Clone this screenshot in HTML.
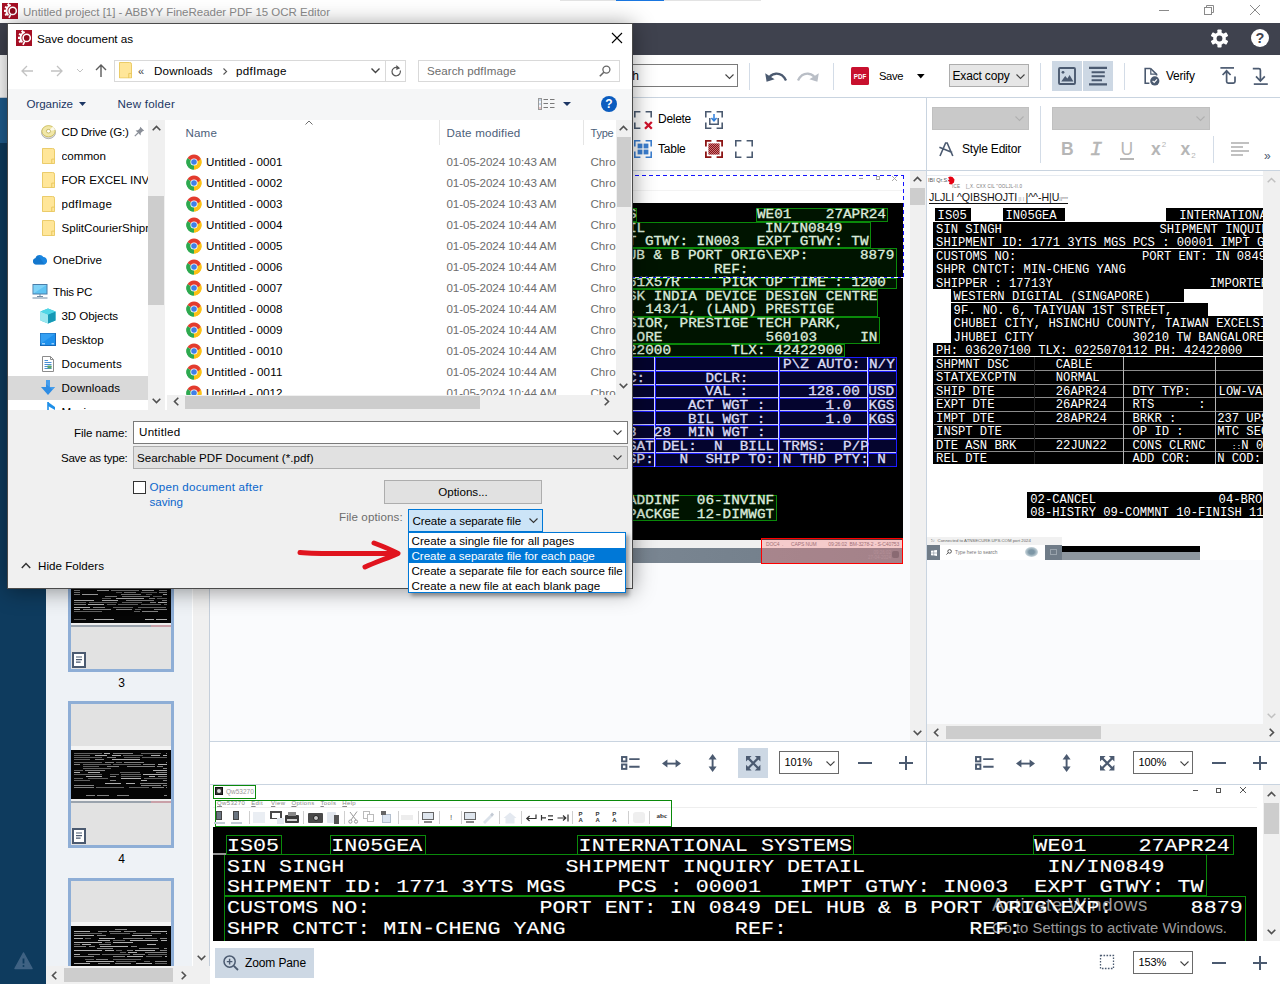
<!DOCTYPE html>
<html lang="en">
<head>
<meta charset="utf-8">
<title>Untitled project [1] - ABBYY FineReader PDF 15 OCR Editor</title>
<style>
*{box-sizing:border-box;margin:0;padding:0}
html,body{width:1280px;height:984px;overflow:hidden;background:#fff}
body{position:relative;font-family:"Liberation Sans",sans-serif;font-size:11.6px;color:#000;line-height:1}
.a{position:absolute}
.t{position:absolute;white-space:pre;line-height:14px;height:14px}
.mono{font-family:"Liberation Mono",monospace}
svg{position:absolute;overflow:visible}
/* ---------- app chrome ---------- */
#titlebar{left:0;top:0;width:1280px;height:23px;background:#fff}
#darkbar{left:0;top:23px;width:1280px;height:31.5px;background:#3f424e}
#maintb{left:0;top:54.5px;width:1280px;height:43.5px;background:#fff;border-bottom:1px solid #c9d4e0}
#sidebar{left:0;top:98px;width:46px;height:886px;background:#0e3b5e}
#pages{left:46px;top:98px;width:164px;height:886px;background:#eef2f6}
#imgpane{left:210px;top:98px;width:716px;height:686px;background:#fff}
#txtpane{left:927px;top:98px;width:353px;height:686px;background:#fff}
#zoompane{left:210px;top:785px;width:1070px;height:155px;background:#fff}
#botbar{left:210px;top:940px;width:1070px;height:44px;background:#fff}
.vsep{position:absolute;width:1px;background:#d3dce7}
.hsep{position:absolute;height:1px;background:#d3dce7}
/*IMGCSS*/.tm{position:absolute;white-space:pre;font-family:"Liberation Mono",monospace;font-size:12.3px;line-height:14px;height:14px;transform:scaleX(1.1651);transform-origin:0 0;-webkit-text-stroke:.3px currentColor}/*IMGCSS_END*/
/*TXTCSS*/.tt{position:absolute;white-space:pre;font-family:"Liberation Mono",monospace;font-size:12.2px;line-height:14px;height:14px;color:#fff;letter-spacing:-0.021px}/*TXTCSS_END*/
/*ZOOMCSS*/.tz{position:absolute;white-space:pre;font-family:"Liberation Mono",monospace;font-size:19.2px;line-height:22px;height:22px;color:#fff;transform:scaleX(1.1309);transform-origin:0 0;-webkit-text-stroke:.12px currentColor}/*ZOOMCSS_END*/
</style>
</head>
<body>
<!-- ======= application chrome ======= -->
<div id="titlebar" class="a"></div>
<div id="darkbar" class="a"></div>
<div id="maintb" class="a"></div>
<div id="sidebar" class="a"></div>
<div id="pages" class="a"></div>
<div id="imgpane" class="a"></div>
<div id="txtpane" class="a"></div>
<div id="zoompane" class="a"></div>
<div id="botbar" class="a"></div>
<!-- title bar -->
<div class="a" style="left:560px;top:0;width:201px;height:1px;background:#e3e3e3"></div>
<div class="a" style="left:616px;top:0;width:48px;height:1px;background:#1976e0"></div>
<svg style="left:2px;top:3px" width="16" height="16"><use href="#abbyy"/></svg>
<div class="t" style="left:23px;top:4.5px;color:#8c8c8c;font-size:11.5px;--w:307;letter-spacing:-0.015px">Untitled project [1] - ABBYY FineReader PDF 15 OCR Editor</div>
<svg style="left:1159px;top:10px" width="10" height="1"><rect width="10" height="1" fill="#8a8a8a"/></svg>
<svg style="left:1204px;top:5px" width="10" height="10"><path d="M2.5 2.5 V0.5 H9.5 V7.5 H7.5" stroke="#8a8a8a" fill="none"/><rect x="0.5" y="2.5" width="7" height="7" stroke="#8a8a8a" fill="#fff"/></svg>
<svg style="left:1250px;top:5px" width="10" height="10"><path d="M0 0 L10 10 M10 0 L0 10" stroke="#8a8a8a" stroke-width="1" fill="none"/></svg>
<!-- dark bar icons -->
<svg style="left:1209.5px;top:28.5px" width="19" height="19" viewBox="-9.5 -9.5 19 19"><g fill="#fff"><circle r="6.3"/><g id="gt"><rect x="-2.1" y="-9" width="4.2" height="18" rx=".8"/></g><use href="#gt" transform="rotate(60)"/><use href="#gt" transform="rotate(120)"/></g><circle r="2.9" fill="#3f424e"/></svg>
<svg style="left:1251px;top:29px" width="18" height="18"><circle cx="9" cy="9" r="9" fill="#fff"/><text x="9" y="14" text-anchor="middle" font-family="Liberation Sans,sans-serif" font-weight="700" font-size="14.5" fill="#3f424e">?</text></svg>
<!-- main toolbar -->
<div class="a" style="left:560px;top:64px;width:178px;height:23px;background:#fff;border:1px solid #7a7a7a"></div>
<div class="t" style="left:599.5px;top:69px;font-size:12px">English</div>
<svg style="left:725px;top:73.5px" width="9" height="6"><path d="M0.5 0.5 L4.5 4.5 L8.5 0.5" stroke="#444" stroke-width="1.1" fill="none"/></svg>
<div class="vsep" style="left:749px;top:63px;height:27px"></div>
<svg style="left:765px;top:69px" width="23" height="13"><path d="M3 11.5 C 5 3.5, 16 1.5, 21 11.5" stroke="#4b5a70" stroke-width="2.3" fill="none"/><path d="M0.2 4.2 L1.6 12.8 L9.6 10.2 Z" fill="#4b5a70"/></svg>
<svg style="left:796px;top:69px" width="23" height="13"><path d="M20 11.5 C 18 3.5, 7 1.5, 2 11.5" stroke="#b9bec6" stroke-width="2.3" fill="none"/><path d="M22.8 4.2 L21.4 12.8 L13.4 10.2 Z" fill="#b9bec6"/></svg>
<div class="vsep" style="left:833px;top:63px;height:27px"></div>
<svg style="left:851px;top:67px" width="18" height="18"><rect width="18" height="18" rx="1.5" fill="#c8102e"/><text x="9" y="11.8" text-anchor="middle" font-family="Liberation Sans,sans-serif" font-weight="700" font-size="7" fill="#fff" textLength="12.5" lengthAdjust="spacingAndGlyphs">PDF</text></svg>
<div class="t" style="left:879px;top:69px;font-size:11.2px;--w:24;letter-spacing:-0.375px">Save</div>
<svg style="left:916.5px;top:74px" width="8" height="5"><path d="M0 0 H7.6 L3.8 4.4 Z" fill="#000"/></svg>
<div class="a" style="left:949px;top:64px;width:80px;height:23px;background:#e6e6e6;border:1px solid #adadad"></div>
<div class="t" style="left:952.5px;top:69px;font-size:12px;--w:57;letter-spacing:-0.170px">Exact copy</div>
<svg style="left:1016px;top:73.5px" width="9" height="6"><path d="M0.5 0.5 L4.5 4.5 L8.5 0.5" stroke="#444" stroke-width="1.1" fill="none"/></svg>
<div class="vsep" style="left:1040px;top:63px;height:27px"></div>
<div class="a" style="left:1052px;top:61px;width:30px;height:30px;background:#cdd8e4"></div>
<div class="a" style="left:1083px;top:61px;width:30px;height:30px;background:#cdd8e4"></div>


<svg style="left:1040px;top:55px" width="240" height="45" viewBox="1040 55 240 45" fill="none" stroke="#4b5a70">
<rect x="1059" y="68" width="16" height="16" rx="1" stroke-width="1.9"/><circle cx="1063" cy="72.3" r="1.4" fill="#4b5a70" stroke="none"/><path d="M1061.2 81.6 L1065.2 76 L1067.4 78.6 L1069.6 75 L1073.4 81.6 Z" fill="#4b5a70" stroke="none"/>
<path d="M1089 67.9 H1107 M1089 84.3 H1107" stroke-width="2.3"/><path d="M1091.6 72.3 H1104.8 M1091.6 76.2 H1104.8 M1091.6 80.3 H1102" stroke-width="2"/>
<path d="M1150.6 68.5 H1145.2 V83.3 H1149.4 M1150.6 68.5 L1156.6 74.4 V75.4" stroke-width="1.6"/><path d="M1150.8 68.8 V74.2 H1156.4" stroke-width="1.2"/><circle cx="1154.8" cy="80.9" r="4.6" fill="#4b5a70" stroke="none"/><path d="M1152.6 80.9 L1154.2 82.5 L1157 79.4" stroke="#fff" stroke-width="1.2"/>
<path d="M1220.4 67.9 H1234" stroke-width="1.7"/><path d="M1222.6 75 L1226.6 70.8 L1230.6 75 M1226.6 71.4 V81.6 Q1226.6 83.2 1228.2 83.2 H1233.4 Q1235 83.2 1235 81.6 V76.6" stroke-width="1.7"/>
<path d="M1252.8 68.6 H1258.8 Q1260.4 68.6 1260.4 70.2 V80.4 M1256 76.4 L1260.4 81 L1264.8 76.4" stroke-width="1.7"/><path d="M1253.8 84.1 H1267.8" stroke-width="1.7"/>
</svg>
<div class="vsep" style="left:1124px;top:63px;height:27px"></div>

<div class="t" style="left:1166px;top:69px;font-size:12px;--w:28.7;letter-spacing:-0.219px">Verify</div>


<!-- pane toolbars separator lines -->
<div class="hsep" style="left:210px;top:170px;width:1070px;background:#c9d4e0"></div>
<div class="vsep" style="left:926px;top:98px;height:687px;background:#c9d4e0"></div>
<!-- image pane toolbar -->
<svg style="left:634px;top:110.5px" width="19" height="18"><path d="M0.8 6.4 V0.8 H6.4 M11.6 0.8 H17.2 V6.4 M0.8 11.6 V17.2 H6.4" stroke="#4b5a70" stroke-width="1.6" fill="none"/><path d="M11 11 L17.8 17.8 M17.8 11 L11 17.8" stroke="#d0112b" stroke-width="2.3"/></svg>
<div class="t" style="left:658px;top:112px;font-size:12px;--w:33;letter-spacing:-0.281px">Delete</div>
<svg style="left:705px;top:110.5px" width="18" height="18"><path d="M0.8 6.4 V0.8 H6.4 M11.6 0.8 H17.2 V6.4 M0.8 11.6 V17.2 H6.4 M11.6 17.2 H17.2 V11.6" stroke="#4b5a70" stroke-width="1.6" fill="none"/><path d="M4.8 7 V13.2 H13.2 V7" stroke="#4b5a70" stroke-width="1.5" fill="none"/><path d="M9 3 V9.4 M6.4 7 L9 9.8 L11.6 7" stroke="#2f7fdb" stroke-width="1.5" fill="none"/></svg>
<svg style="left:634px;top:140px" width="18" height="18"><path d="M0.8 6.4 V0.8 H6.4 M11.6 0.8 H17.2 V6.4 M0.8 11.6 V17.2 H6.4 M11.6 17.2 H17.2 V11.6" stroke="#3c7fd0" stroke-width="1.6" fill="none"/><g fill="#3c7fd0"><rect x="3.6" y="3.6" width="4.8" height="4.8"/><rect x="9.6" y="3.6" width="4.8" height="4.8"/><rect x="3.6" y="9.6" width="4.8" height="4.8"/><rect x="9.6" y="9.6" width="4.8" height="4.8"/></g></svg>
<div class="t" style="left:658px;top:142px;font-size:12px;--w:27.5;letter-spacing:-0.237px">Table</div>
<svg style="left:705px;top:140px" width="18" height="18"><path d="M0.9 6.4 V0.9 H6.4 M11.6 0.9 H17.1 V6.4 M0.9 11.6 V17.1 H6.4 M11.6 17.1 H17.1 V11.6" stroke="#8c1515" stroke-width="1.8" fill="none"/><defs><pattern id="chk" width="2" height="2" patternUnits="userSpaceOnUse"><rect width="2" height="2" fill="#c9737b"/><rect width="1" height="1" fill="#8c1515"/><rect x="1" y="1" width="1" height="1" fill="#8c1515"/></pattern></defs><rect x="3.4" y="3.4" width="11.2" height="11.2" fill="url(#chk)"/></svg>
<svg style="left:735px;top:140px" width="18" height="18"><path d="M0.8 6.4 V0.8 H6.4 M11.6 0.8 H17.2 V6.4 M0.8 11.6 V17.2 H6.4 M11.6 17.2 H17.2 V11.6" stroke="#4b5a70" stroke-width="1.6" fill="none"/></svg>
<!-- text pane toolbar -->
<div class="a" style="left:932px;top:107px;width:97px;height:23px;background:#c9c9c9;border:1px solid #c0c0c0"></div>
<svg style="left:1015px;top:116px" width="9" height="6"><path d="M0.5 0.5 L4.5 4.5 L8.5 0.5" stroke="#b0b0b0" stroke-width="1.1" fill="none"/></svg>
<div class="vsep" style="left:1040px;top:106px;height:57px"></div>
<div class="a" style="left:1052px;top:107px;width:158px;height:23px;background:#c9c9c9;border:1px solid #c0c0c0"></div>
<svg style="left:1196px;top:116px" width="9" height="6"><path d="M0.5 0.5 L4.5 4.5 L8.5 0.5" stroke="#b0b0b0" stroke-width="1.1" fill="none"/></svg>
<svg style="left:939px;top:142px" width="15" height="15"><path d="M1 14 L6.6 1 L8.2 1 L13.8 14 M0.4 5.2 L13.2 10.4" stroke="#4b5a70" stroke-width="1.6" fill="none"/></svg>
<div class="t" style="left:962px;top:142px;font-size:12px;--w:59;letter-spacing:-0.197px">Style Editor</div>
<div class="t" style="left:1061px;top:138px;height:22px;line-height:22px;font-size:17.5px;font-weight:700;color:#b6b6b6">B</div>
<div class="t" style="left:1090px;top:139px;height:22px;line-height:22px;font-size:20.5px;font-style:italic;font-weight:400;-webkit-text-stroke:.4px #b6b6b6;font-family:'Liberation Mono',monospace;color:#b6b6b6">I</div>
<div class="t" style="left:1120.5px;top:138px;height:22px;line-height:22px;font-size:17.5px;color:#b6b6b6">U</div>
<div class="a" style="left:1120px;top:157.5px;width:14px;height:2px;background:#b6b6b6"></div>
<div class="t" style="left:1151px;top:138px;height:22px;line-height:22px;font-size:17.5px;font-weight:700;color:#b6b6b6">x<span style="font-size:8px;font-weight:400;position:relative;top:-8px;left:1px">2</span></div>
<div class="t" style="left:1180.5px;top:138px;height:22px;line-height:22px;font-size:17.5px;font-weight:700;color:#b6b6b6">x<span style="font-size:8px;font-weight:400;position:relative;top:3px;left:1px">2</span></div>
<div class="vsep" style="left:1213px;top:136px;height:27px"></div>
<svg style="left:1231px;top:142px" width="18" height="14"><path d="M0 1 H18 M0 5 H12 M0 9 H18 M0 13 H12" stroke="#adadad" stroke-width="1.6"/></svg>
<div class="t" style="left:1264px;top:149px;font-size:12px;color:#4b5a70">»</div>

<!--IMGPANE_START--><!-- image pane content -->
<div class="a" style="left:210px;top:171px;width:700px;height:570px;background:#fafbfd;overflow:hidden">
<div class="a" style="left:5.0px;top:4.0px;width:688.0px;height:388.0px;background:#fff"></div>
<div class="a" style="left:5.0px;top:19.0px;width:688.0px;height:1.0px;background:#f3f3f3"></div>
<div class="a" style="left:5.0px;top:31.5px;width:688.0px;height:337.5px;background:#000"></div>
<div class="a" style="left:5.0px;top:369.0px;width:688.0px;height:8.0px;background:#f0f0f0"></div>
<div class="a" style="left:5.0px;top:377.0px;width:688.0px;height:15.0px;background:linear-gradient(90deg,#7b8793 0,#76828e 30%,#808b96 34%,#727e8a 38%,#7a8692 60%,#6f7b87 100%)"></div>
<div class="a" style="left:649px;top:7px;width:4px;height:1px;background:#aaa"></div>
<div class="a" style="left:665.5px;top:5px;width:4px;height:4px;border:1px solid #aaa"></div>
<svg style="left:682px;top:5px" width="5" height="5"><path d="M0 0 L5 5 M5 0 L0 5" stroke="#aaa" stroke-width="1"/></svg>
<div class="a" style="left:245.8px;top:37.0px;width:181.7px;height:13.5px;border:1px solid #0a8a0a;background:rgba(0,40,0,.5)"></div>
<div class="a" style="left:546.0px;top:37.0px;width:131.5px;height:13.5px;border:1px solid #0a8a0a;background:rgba(0,40,0,.5)"></div>
<div class="a" style="left:12.0px;top:50.5px;width:648.6px;height:26.0px;border:1px solid #0a8a0a;background:rgba(0,40,0,.5)"></div>
<div class="a" style="left:12.0px;top:76.5px;width:674.6px;height:30.0px;border:1px solid #0a8a0a;background:rgba(0,40,0,.5)"></div>
<div class="a" style="left:12.0px;top:106.5px;width:674.6px;height:11.5px;border:1px solid #0a8a0a;background:rgba(0,40,0,.5)"></div>
<div class="a" style="left:12.0px;top:118.0px;width:656.0px;height:28.0px;border:1px solid #0a8a0a;background:rgba(0,40,0,.5)"></div>
<div class="a" style="left:12.0px;top:146.0px;width:657.5px;height:27.0px;border:1px solid #0a8a0a;background:rgba(0,40,0,.5)"></div>
<div class="a" style="left:12.0px;top:173.0px;width:622.5px;height:13.0px;border:1px solid #0a8a0a;background:rgba(0,40,0,.5)"></div>
<div class="a" style="left:12.0px;top:323.5px;width:554.5px;height:26.0px;border:1px solid #0a8a0a;background:rgba(0,40,0,.5)"></div>
<div class="a" style="left:12.0px;top:186.0px;width:675.0px;height:109.6px;background:#04042e;border:1px solid #1c1cff"></div>
<div class="a" style="left:13.0px;top:198.6px;width:673.0px;height:1.0px;background:#c4c4f4"></div>
<div class="a" style="left:13.0px;top:199.6px;width:673.0px;height:1.0px;background:#1c1cff"></div>
<div class="a" style="left:13.0px;top:212.8px;width:673.0px;height:1.0px;background:#c4c4f4"></div>
<div class="a" style="left:13.0px;top:213.8px;width:673.0px;height:1.0px;background:#1c1cff"></div>
<div class="a" style="left:13.0px;top:225.6px;width:673.0px;height:1.0px;background:#c4c4f4"></div>
<div class="a" style="left:13.0px;top:226.6px;width:673.0px;height:1.0px;background:#1c1cff"></div>
<div class="a" style="left:13.0px;top:239.0px;width:673.0px;height:1.0px;background:#c4c4f4"></div>
<div class="a" style="left:13.0px;top:240.0px;width:673.0px;height:1.0px;background:#1c1cff"></div>
<div class="a" style="left:13.0px;top:253.0px;width:673.0px;height:1.0px;background:#c4c4f4"></div>
<div class="a" style="left:13.0px;top:254.0px;width:673.0px;height:1.0px;background:#1c1cff"></div>
<div class="a" style="left:13.0px;top:266.6px;width:673.0px;height:1.0px;background:#c4c4f4"></div>
<div class="a" style="left:13.0px;top:267.6px;width:673.0px;height:1.0px;background:#1c1cff"></div>
<div class="a" style="left:13.0px;top:281.0px;width:673.0px;height:1.0px;background:#c4c4f4"></div>
<div class="a" style="left:13.0px;top:282.0px;width:673.0px;height:1.0px;background:#1c1cff"></div>
<div class="a" style="left:444.0px;top:186.0px;width:1.0px;height:109.6px;background:#d4d4ff"></div>
<div class="a" style="left:445.0px;top:186.0px;width:1.4px;height:109.6px;background:#1c1cff"></div>
<div class="a" style="left:568.0px;top:186.0px;width:1.0px;height:109.6px;background:#d4d4ff"></div>
<div class="a" style="left:569.0px;top:186.0px;width:1.4px;height:109.6px;background:#1c1cff"></div>
<div class="a" style="left:657.0px;top:186.0px;width:1.0px;height:109.6px;background:#d4d4ff"></div>
<div class="a" style="left:658.0px;top:186.0px;width:1.4px;height:109.6px;background:#1c1cff"></div>
<div class="tm" style="left:417.8px;top:36.9px;color:#dcebdc">S</div>
<div class="tm" style="left:546.8px;top:36.9px;color:#dcebdc">WE01    27APR24</div>
<div class="tm" style="left:417.8px;top:50.5px;color:#dcebdc">IL</div>
<div class="tm" style="left:555.4px;top:50.5px;color:#dcebdc">IN/IN0849</div>
<div class="tm" style="left:392.0px;top:64.2px;color:#dcebdc">IMPT GTWY: IN003  EXPT GTWY: TW</div>
<div class="tm" style="left:220.0px;top:77.8px;color:#dcebdc">PORT ENT: IN 0849 DEL HUB &amp; B PORT ORIG\EXP:      8879</div>
<div class="tm" style="left:503.8px;top:91.5px;color:#dcebdc">REF:</div>
<div class="tm" style="left:417.8px;top:105.1px;color:#dcebdc">61X57R     PICK UP TIME : 1200</div>
<div class="tm" style="left:417.8px;top:118.7px;color:#dcebdc">SK INDIA DEVICE DESIGN CENTRE</div>
<div class="tm" style="left:417.8px;top:132.4px;color:#dcebdc">. 143/1, (LAND) PRESTIGE</div>
<div class="tm" style="left:417.8px;top:146.0px;color:#dcebdc">SIOR, PRESTIGE TECH PARK,</div>
<div class="tm" style="left:417.8px;top:159.7px;color:#dcebdc">LORE            560103     IN</div>
<div class="tm" style="left:417.8px;top:173.3px;color:#dcebdc">22000       TLX: 42422900</div>
<div class="tm" style="left:572.6px;top:186.9px;color:#dcdcf6">P\Z AUTO: N/Y</div>
<div class="tm" style="left:417.8px;top:200.6px;color:#dcdcf6">C:       DCLR:</div>
<div class="tm" style="left:495.2px;top:214.2px;color:#dcdcf6">VAL :       128.00 USD</div>
<div class="tm" style="left:478.0px;top:227.9px;color:#dcdcf6">ACT WGT :       1.0  KGS</div>
<div class="tm" style="left:478.0px;top:241.5px;color:#dcdcf6">BIL WGT :       1.0  KGS</div>
<div class="tm" style="left:417.8px;top:255.1px;color:#dcdcf6">8  28  MIN WGT :</div>
<div class="tm" style="left:417.8px;top:268.8px;color:#dcdcf6">SAT DEL:  N  BILL TRMS:  P/P</div>
<div class="tm" style="left:417.8px;top:282.4px;color:#dcdcf6">SP:   N  SHIP TO: N THD PTY: N</div>
<div class="tm" style="left:417.8px;top:323.3px;color:#dcebdc">ADDINF  06-INVINF</div>
<div class="tm" style="left:417.8px;top:337.0px;color:#dcebdc">PACKGE  12-DIMWGT</div>
<div class="a" style="left:12.0px;top:4.0px;width:681.5px;height:102.5px;background:repeating-linear-gradient(90deg,#1414ff 0 4px,transparent 4px 7px) 0 0/100% 1px no-repeat,repeating-linear-gradient(180deg,#1414ff 0 4px,transparent 4px 7px) 100% 0/1px 100% no-repeat,repeating-linear-gradient(180deg,#1414ff 0 4px,transparent 4px 7px) 0 0/1px 100% no-repeat"></div>
<div class="a" style="left:12.0px;top:106.0px;width:681.5px;height:1.0px;background:repeating-linear-gradient(90deg,#fff 0 4px,#1414ff 4px 7px)"></div>
<div class="a" style="left:551.0px;top:366.5px;width:142.0px;height:26.0px;border:1px solid #ff0000;background:rgba(255,140,140,.37)"></div>
<div class="t" style="left:556px;top:370px;font-size:5px;line-height:6px;height:6px;color:#a07078;letter-spacing:-.1px">DOC4  .      CAPS NUM         09:26:02  BM-3278-2 - S-C40753</div>
<div class="t" style="left:658px;top:379px;font-size:4.5px;line-height:5px;height:10px;color:#b59098;text-align:right">09:26:02<br>27-04-2024</div>
<div class="a" style="left:682px;top:380px;width:7px;height:7px;background:#8a6a72;border-radius:2px"></div>
</div>
<div class="a" style="left:910px;top:171px;width:16px;height:570px;background:#f0f0f0"></div>
<div class="a" style="left:910px;top:188px;width:15px;height:17px;background:#cdcdcd"></div>
<svg style="left:913px;top:176px" width="9" height="6"><path d="M0.7 5.3 L4.5 1.5 L8.3 5.3" stroke="#505050" stroke-width="1.6" fill="none"/></svg>
<svg style="left:913px;top:730px" width="9" height="6"><path d="M0.7 0.7 L4.5 4.5 L8.3 0.7" stroke="#505050" stroke-width="1.6" fill="none"/></svg><!--IMGPANE_END-->
<!--TXTPANE_START--><!-- text pane content -->
<div class="a" style="left:927px;top:171px;width:336px;height:553px;background:#fafbfd;overflow:hidden">
<div class="a" style="left:0.0px;top:5.0px;width:336.0px;height:384.0px;background:#fff"></div>
<div class="a" style="left:0.0px;top:0.0px;width:336.0px;height:5.0px;background:#fff"></div>
<div class="a" style="left:0.0px;top:4.0px;width:336.0px;height:1.0px;background:#e6ebf1"></div>
<div class="t" style="left:1px;top:5px;font-size:5.5px;line-height:8px;height:8px;color:#555">IBI Qr.S:</div>
<svg style="left:20px;top:4.5px" width="8" height="9"><path d="M1 1.5 L3 0.5 L5.5 1 L7.5 3.5 L7 6.5 L4.5 8.5 L2 8 L2.6 6 L0.8 4.6 L2.4 3.4 Z" fill="#e60012"/></svg>
<div class="t" style="left:25px;top:13px;font-size:4.5px;line-height:6px;height:6px;color:#777;letter-spacing:.2px">ICE    [_X. CXX CIL "OOLJL-II.0</div>
<div class="t" id="garble" style="left:2px;top:19.5px;font-size:10.6px;line-height:13px;height:13px;color:#111;letter-spacing:-.06px;border-bottom:1px solid #111">JLJLI ^QIBSHOJTI<span style="font-size:5px;color:#999;letter-spacing:0"> |I I </span>|^^-H|U<span style="font-size:5px;color:#777;letter-spacing:0">II***</span></div>
<div class="a" style="left:7.8px;top:37.1px;width:36.2px;height:13.4px;background:#000"></div>
<div class="a" style="left:76.0px;top:37.1px;width:62.0px;height:13.4px;background:#000"></div>
<div class="a" style="left:239.0px;top:37.1px;width:136.6px;height:13.4px;background:#000"></div>
<div class="a" style="left:6.1px;top:50.6px;width:369.5px;height:26.9px;background:#000"></div>
<div class="a" style="left:6.1px;top:77.6px;width:369.5px;height:40.4px;background:#000"></div>
<div class="a" style="left:23.7px;top:118.1px;width:233.0px;height:13.4px;background:#000"></div>
<div class="a" style="left:23.7px;top:131.6px;width:257.8px;height:13.4px;background:#000"></div>
<div class="a" style="left:23.7px;top:145.1px;width:351.9px;height:26.9px;background:#000"></div>
<div class="a" style="left:6.1px;top:172.1px;width:369.5px;height:13.4px;background:#000"></div>
<div class="a" style="left:6.1px;top:185.6px;width:369.5px;height:107.9px;background:#000"></div>
<div class="a" style="left:100.3px;top:320.6px;width:275.3px;height:26.9px;background:#000"></div>
<div class="tt" style="left:10.6px;top:38.1px;">IS05</div>
<div class="tt" style="left:78.5px;top:38.1px;">IN05GEA</div>
<div class="tt" style="left:252.2px;top:38.1px;">INTERNATIONAL SYSTEMS</div>
<div class="tt" style="left:9.1px;top:51.6px;">SIN SINGH</div>
<div class="tt" style="left:232.5px;top:51.6px;">SHIPMENT INQUIRY DETAIL</div>
<div class="tt" style="left:9.1px;top:65.1px;">SHIPMENT ID: 1771 3YTS MGS PCS : 00001 IMPT GTWY: IN003</div>
<div class="tt" style="left:9.1px;top:78.6px;">CUSTOMS NO:</div>
<div class="tt" style="left:215.0px;top:78.6px;">PORT ENT: IN 0849 DEL</div>
<div class="tt" style="left:9.1px;top:92.1px;">SHPR CNTCT: MIN-CHENG YANG</div>
<div class="tt" style="left:9.1px;top:105.6px;">SHIPPER : 17713Y</div>
<div class="tt" style="left:282.8px;top:105.6px;">IMPORTER</div>
<div class="tt" style="left:26.6px;top:119.1px;">WESTERN DIGITAL (SINGAPORE)</div>
<div class="tt" style="left:26.6px;top:132.6px;">9F. NO. 6, TAIYUAN 1ST STREET,</div>
<div class="tt" style="left:26.6px;top:146.1px;">CHUBEI CITY, HSINCHU COUNTY, TAIWAN EXCELSIOR</div>
<div class="tt" style="left:26.6px;top:159.6px;">JHUBEI CITY</div>
<div class="tt" style="left:205.5px;top:159.6px;">30210 TW BANGALORE</div>
<div class="tt" style="left:9.1px;top:173.1px;">PH: 036207100 TLX: 0225070112 PH: 42422000</div>
<div class="tt" style="left:9.1px;top:186.6px;">SHPMNT DSC</div>
<div class="tt" style="left:128.8px;top:186.6px;">CABLE</div>
<div class="tt" style="left:9.1px;top:200.1px;">STATXEXCPTN</div>
<div class="tt" style="left:128.8px;top:200.1px;">NORMAL</div>
<div class="tt" style="left:9.1px;top:213.6px;">SHIP DTE</div>
<div class="tt" style="left:128.8px;top:213.6px;">26APR24</div>
<div class="tt" style="left:205.5px;top:213.6px;">DTY TYP:</div>
<div class="tt" style="left:291.6px;top:213.6px;">LOW-VALUE</div>
<div class="tt" style="left:9.1px;top:227.1px;">EXPT DTE</div>
<div class="tt" style="left:128.8px;top:227.1px;">26APR24</div>
<div class="tt" style="left:205.5px;top:227.1px;">RTS      :</div>
<div class="tt" style="left:9.1px;top:240.6px;">IMPT DTE</div>
<div class="tt" style="left:128.8px;top:240.6px;">28APR24</div>
<div class="tt" style="left:205.5px;top:240.6px;">BRKR :</div>
<div class="tt" style="left:290.2px;top:240.6px;">237 UPS</div>
<div class="tt" style="left:9.1px;top:254.1px;">INSPT DTE</div>
<div class="tt" style="left:205.5px;top:254.1px;">OP ID :</div>
<div class="tt" style="left:290.2px;top:254.1px;">MTC SEC</div>
<div class="tt" style="left:9.1px;top:267.6px;">DTE ASN BRK</div>
<div class="tt" style="left:128.8px;top:267.6px;">22JUN22</div>
<div class="tt" style="left:205.5px;top:267.6px;">CONS CLRNC</div>
<div class="tt" style="left:304.8px;top:267.6px;"><span style="font-size:8px">::</span>N 0</div>
<div class="tt" style="left:9.1px;top:281.1px;">REL DTE</div>
<div class="tt" style="left:205.5px;top:281.1px;">ADD COR:</div>
<div class="tt" style="left:290.2px;top:281.1px;">N COD:</div>
<div class="tt" style="left:103.3px;top:321.6px;">02-CANCEL</div>
<div class="tt" style="left:291.6px;top:321.6px;">04-BROKER</div>
<div class="tt" style="left:103.3px;top:335.1px;">08-HISTRY 09-COMMNT 10-FINISH 11-</div>
<div class="a" style="left:7.0px;top:199.3px;width:330.0px;height:1.0px;background:#8c8c8c"></div>
<div class="a" style="left:7.0px;top:212.8px;width:330.0px;height:1.0px;background:#8c8c8c"></div>
<div class="a" style="left:7.0px;top:226.3px;width:330.0px;height:1.0px;background:#8c8c8c"></div>
<div class="a" style="left:7.0px;top:239.8px;width:330.0px;height:1.0px;background:#8c8c8c"></div>
<div class="a" style="left:7.0px;top:253.3px;width:330.0px;height:1.0px;background:#8c8c8c"></div>
<div class="a" style="left:7.0px;top:266.8px;width:330.0px;height:1.0px;background:#8c8c8c"></div>
<div class="a" style="left:7.0px;top:280.3px;width:330.0px;height:1.0px;background:#8c8c8c"></div>
<div class="a" style="left:196.0px;top:185.6px;width:1.0px;height:107.9px;background:#b4b4b4"></div>
<div class="a" style="left:288.0px;top:185.6px;width:1.0px;height:107.9px;background:#b4b4b4"></div>
<div class="a" style="left:107.0px;top:185.6px;width:1.0px;height:107.9px;background:#222"></div>
<div class="a" style="left:0.0px;top:366.0px;width:135.0px;height:8.0px;background:#f1f1f1"></div>
<div class="t" style="left:4px;top:367px;font-size:4.3px;line-height:6px;height:6px;color:#666">&#9099;   Connected to ATNSECURE.UPS.COM port 2024</div>
<div class="a" style="left:0.0px;top:374.0px;width:135.0px;height:15.0px;background:#fff"></div>
<div class="a" style="left:0.0px;top:374.0px;width:13.0px;height:15.0px;background:#707c88"></div>
<svg style="left:3.5px;top:378.5px" width="6" height="6"><path d="M0 0.8 L2.6 0.4 V2.8 H0Z M3.1 0.3 L6 0 V2.8 H3.1Z M0 3.3 H2.6 V5.6 L0 5.2Z M3.1 3.3 H6 V6 L3.1 5.6Z" fill="#fff"/></svg>
<svg style="left:19px;top:378px" width="6" height="6"><circle cx="3.6" cy="2.4" r="1.8" stroke="#333" stroke-width=".8" fill="none"/><path d="M2.4 3.6 L0.4 5.6" stroke="#333" stroke-width=".8"/></svg>
<div class="t" style="left:28px;top:378.5px;font-size:4.8px;line-height:6px;height:6px;color:#777">Type here to search</div>
<div class="a" style="left:98px;top:376px;width:13px;height:10px;border-radius:50%;background:radial-gradient(#7d97a6 30%,#c9d6dc 70%,#fff 100%)"></div>
<div class="a" style="left:118.0px;top:374.0px;width:17.0px;height:15.0px;background:#707c88"></div>
<div class="a" style="left:123px;top:378px;width:7px;height:6px;border:1px solid #9aa4ad"></div>
<div class="a" style="left:135.0px;top:375.0px;width:138.0px;height:5.5px;background:#000"></div>
<div class="a" style="left:135.0px;top:380.5px;width:138.0px;height:8.0px;background:#8e979f"></div>
</div>
<div class="a" style="left:1263px;top:171px;width:17px;height:553px;background:#f0f0f0"></div>
<svg style="left:1267px;top:177px" width="9" height="6"><path d="M0.7 5.3 L4.5 1.5 L8.3 5.3" stroke="#c0c0c0" stroke-width="1.5" fill="none"/></svg>
<svg style="left:1267px;top:713px" width="9" height="6"><path d="M0.7 0.7 L4.5 4.5 L8.3 0.7" stroke="#c0c0c0" stroke-width="1.5" fill="none"/></svg>
<div class="a" style="left:927px;top:724px;width:353px;height:17px;background:#f0f0f0"></div>
<div class="a" style="left:946px;top:726px;width:155px;height:13px;background:#cdcdcd"></div>
<svg style="left:933px;top:728px" width="6" height="9"><path d="M5.3 0.7 L1.5 4.5 L5.3 8.3" stroke="#505050" stroke-width="1.6" fill="none"/></svg>
<svg style="left:1269px;top:728px" width="6" height="9"><path d="M0.7 0.7 L4.5 4.5 L0.7 8.3" stroke="#505050" stroke-width="1.6" fill="none"/></svg><!--TXTPANE_END-->
<!--ZOOMPANE_START--><!-- zoom control rows -->
<div class="hsep" style="left:210px;top:741px;width:1070px;background:#c9d4e0"></div>
<div class="hsep" style="left:210px;top:784px;width:1070px;background:#c9d4e0"></div>
<div class="vsep" style="left:209px;top:98px;height:886px;background:#c5cfdb"></div>
<svg style="left:620.5px;top:756px" width="19" height="14"><rect x="1" y="1" width="4.4" height="4.4" fill="none" stroke="#4b5a70" stroke-width="1.9"/><rect x="1" y="8.5" width="4.4" height="4.4" fill="none" stroke="#4b5a70" stroke-width="1.9"/><path d="M8.2 3.1 H18.6 M8.2 10.7 H18.6" stroke="#4b5a70" stroke-width="1.9"/></svg>
<svg style="left:661.5px;top:758.5px" width="19" height="9"><path d="M3.5 4.6 H15.5" stroke="#4b5a70" stroke-width="1.9" fill="none"/><path d="M0 4.6 L5.4 0.6 V8.6 Z M19 4.6 L13.6 0.6 V8.6 Z" fill="#4b5a70"/></svg>
<svg style="left:707.5px;top:753.8px" width="9" height="18"><path d="M4.6 3.5 V14.5" stroke="#4b5a70" stroke-width="1.9" fill="none"/><path d="M4.6 0 L0.6 5.4 H8.6 Z M4.6 18 L0.6 12.6 H8.6 Z" fill="#4b5a70"/></svg>
<div class="a" style="left:738.0px;top:748px;width:30px;height:30px;background:#cdd8e4"></div>
<svg style="left:745.8px;top:755.8px" width="14.4" height="14.4"><path d="M2.4 2.4 L12 12 M12 2.4 L2.4 12" stroke="#4b5a70" stroke-width="2.2"/><path d="M0 5.6 V0 H5.6 Z M8.8 0 H14.4 V5.6 Z M0 8.8 V14.4 H5.6 Z M14.4 8.8 V14.4 H8.8 Z" fill="#4b5a70"/></svg>
<div class="a" style="left:779.0px;top:751px;width:60px;height:23px;background:#fff;border:1px solid #6a6a6a"></div>
<div class="t" style="left:784.5px;top:755px;font-size:11px;--w:27.7;letter-spacing:-0.110px">101%</div>
<svg style="left:825.5px;top:760.5px" width="9" height="6"><path d="M0.5 0.5 L4.5 4.5 L8.5 0.5" stroke="#444" stroke-width="1.1" fill="none"/></svg>
<div class="a" style="left:858.0px;top:762px;width:14px;height:1.8px;background:#4b5a70"></div>
<div class="a" style="left:899.0px;top:762px;width:14px;height:1.8px;background:#4b5a70"></div>
<div class="a" style="left:905.1px;top:755.9px;width:1.8px;height:14px;background:#4b5a70"></div>
<svg style="left:974.5px;top:756px" width="19" height="14"><rect x="1" y="1" width="4.4" height="4.4" fill="none" stroke="#4b5a70" stroke-width="1.9"/><rect x="1" y="8.5" width="4.4" height="4.4" fill="none" stroke="#4b5a70" stroke-width="1.9"/><path d="M8.2 3.1 H18.6 M8.2 10.7 H18.6" stroke="#4b5a70" stroke-width="1.9"/></svg>
<svg style="left:1015.5px;top:758.5px" width="19" height="9"><path d="M3.5 4.6 H15.5" stroke="#4b5a70" stroke-width="1.9" fill="none"/><path d="M0 4.6 L5.4 0.6 V8.6 Z M19 4.6 L13.6 0.6 V8.6 Z" fill="#4b5a70"/></svg>
<svg style="left:1061.5px;top:753.8px" width="9" height="18"><path d="M4.6 3.5 V14.5" stroke="#4b5a70" stroke-width="1.9" fill="none"/><path d="M4.6 0 L0.6 5.4 H8.6 Z M4.6 18 L0.6 12.6 H8.6 Z" fill="#4b5a70"/></svg>
<svg style="left:1099.8px;top:755.8px" width="14.4" height="14.4"><path d="M2.4 2.4 L12 12 M12 2.4 L2.4 12" stroke="#4b5a70" stroke-width="2.2"/><path d="M0 5.6 V0 H5.6 Z M8.8 0 H14.4 V5.6 Z M0 8.8 V14.4 H5.6 Z M14.4 8.8 V14.4 H8.8 Z" fill="#4b5a70"/></svg>
<div class="a" style="left:1133.0px;top:751px;width:60px;height:23px;background:#fff;border:1px solid #6a6a6a"></div>
<div class="t" style="left:1138.5px;top:755px;font-size:11px;--w:27.7;letter-spacing:-0.110px">100%</div>
<svg style="left:1179.5px;top:760.5px" width="9" height="6"><path d="M0.5 0.5 L4.5 4.5 L8.5 0.5" stroke="#444" stroke-width="1.1" fill="none"/></svg>
<div class="a" style="left:1212.0px;top:762px;width:14px;height:1.8px;background:#4b5a70"></div>
<div class="a" style="left:1253.0px;top:762px;width:14px;height:1.8px;background:#4b5a70"></div>
<div class="a" style="left:1259.1px;top:755.9px;width:1.8px;height:14px;background:#4b5a70"></div>
<!-- zoom pane content -->
<div class="a" style="left:211px;top:785px;width:1052px;height:156px;background:#fff;overflow:hidden">
<div class="a" style="left:2.0px;top:42.3px;width:1044.0px;height:114.0px;background:#000"></div>
<div class="a" style="left:2.0px;top:22.0px;width:1044.0px;height:1.0px;background:#eee"></div>
<div class="a" style="left:2.3px;top:0.0px;width:42.5px;height:13.5px;border:1px solid #0a8a0a"></div>
<div class="a" style="left:4.4px;top:15.4px;width:456.6px;height:27.0px;border:1px solid #0a8a0a"></div>
<div class="a" style="left:4px;top:2px;width:8px;height:8px;background:#333;border:1px solid #111"></div><div class="a" style="left:6px;top:4px;width:4px;height:4px;background:#ddd;border-radius:50%"></div>
<div class="t" style="left:15px;top:1.5px;font-size:6.5px;line-height:9px;height:9px;color:#999">Qw53270</div>
<div class="t" style="left:6px;top:14.299999999999955px;font-size:6px;line-height:8px;height:8px;color:#888;letter-spacing:.35px"><u>Q</u>w53270   <u>E</u>dit    <u>V</u>iew   <u>O</u>ptions   <u>T</u>ools   <u>H</u>elp</div>
<div class="a" style="left:5px;top:26px;width:6px;height:9px;background:#6a7480;border:1px solid #444"></div><div class="a" style="left:3px;top:37px;width:11px;height:2px;background:#c3ccd6"></div>
<div class="a" style="left:22px;top:26px;width:6px;height:9px;background:#6a7480;border:1px solid #444"></div><div class="a" style="left:20px;top:37px;width:11px;height:2px;background:#c3ccd6"></div>
<div class="a" style="left:42px;top:27px;width:12px;height:11px;background:#eaeef3"></div>
<div class="a" style="left:59px;top:26px;width:12px;height:8px;border:2px solid #4a4a4a;border-bottom-width:1.5px;background:#fff"></div><div class="a" style="left:66px;top:33px;width:7px;height:6px;background:#e3e8ee"></div>
<div class="a" style="left:74px;top:30px;width:14px;height:8px;background:#3a3a3a;border-radius:1px"></div><div class="a" style="left:77px;top:26.5px;width:8px;height:4px;background:#888"></div><div class="a" style="left:76px;top:34px;width:10px;height:2px;background:#d0d0d0"></div>
<div class="a" style="left:97px;top:27.5px;width:15px;height:10px;background:#4a4a4a;border-radius:1px"></div><div class="a" style="left:101.5px;top:29.5px;width:6px;height:6px;background:#c8c8c8;border-radius:50%;border:1px solid #222"></div>
<div class="a" style="left:116px;top:27px;width:9px;height:11px;background:#e2e7ee;border-radius:1px"></div><div class="a" style="left:123px;top:30px;width:5px;height:9px;background:#555"></div>
<svg style="left:136.5px;top:25.5px" width="11" height="13"><path d="M9 0.5 L3 9 M2 1 L8 9" stroke="#999" stroke-width="1"/><circle cx="2.4" cy="10.6" r="1.6" stroke="#999" fill="none"/><circle cx="8" cy="10.6" r="1.6" stroke="#999" fill="none"/></svg>
<div class="a" style="left:152px;top:26px;width:7px;height:8px;border:1px solid #bbb;background:#fff"></div><div class="a" style="left:156px;top:29px;width:7px;height:8px;border:1px solid #bbb;background:#fff"></div>
<div class="a" style="left:170.60000000000002px;top:29px;width:9px;height:9px;background:#dde6f2;border:1px solid #b3bfce"></div><div class="a" style="left:169.60000000000002px;top:26px;width:5px;height:4px;background:#666"></div>
<div class="a" style="left:189.7px;top:30px;width:12px;height:5px;background:#ededed"></div>
<div class="a" style="left:211px;top:27px;width:12px;height:8px;border:1px solid #666;background:#dfe6ee"></div><div class="a" style="left:213px;top:36px;width:8px;height:1.5px;background:#888"></div>
<div class="t" style="left:239px;top:28px;font-size:8px;line-height:9px;height:9px;color:#555">!</div>
<div class="a" style="left:253px;top:27px;width:12px;height:8px;border:1px solid #666;background:#dfe6ee"></div><div class="a" style="left:255px;top:36px;width:8px;height:1.5px;background:#888"></div>
<svg style="left:271px;top:27px" width="12" height="12"><path d="M1 10 L8 3 L10 5 L3 12Z" fill="#dbe2ea"/><path d="M8 3 L10 0.5 L12 2.5 L10 5Z" fill="#c3cad4"/></svg>
<svg style="left:292px;top:27px" width="14" height="12"><path d="M7 0.5 L13.5 6 H11.5 V11.5 H2.5 V6 H0.5Z" fill="#e4e9f0"/></svg>
<svg style="left:314px;top:29px" width="12" height="8"><path d="M11 0.5 V4.5 H2 M4.6 2 L1.8 4.5 L4.6 7" stroke="#333" stroke-width="1.2" fill="none"/></svg>
<svg style="left:330px;top:29px" width="13" height="8"><path d="M0.5 1 V6.5 M0.5 3.8 H5 M7 1.8 H12 M7 5.6 H12" stroke="#333" stroke-width="1.2" fill="none"/></svg>
<svg style="left:346px;top:29px" width="12" height="8"><path d="M0.5 4 H8.5 M6 1.5 L8.8 4 L6 6.5 M11 0.5 V7.5" stroke="#333" stroke-width="1.2" fill="none"/></svg>
<div class="t" style="left:367.5px;top:25.5px;font-size:6px;line-height:6px;height:13px;color:#333;font-weight:700">P<br>A</div>
<div class="t" style="left:384.5px;top:25.5px;font-size:6px;line-height:6px;height:13px;color:#333;font-weight:700">P<br>A</div>
<div class="t" style="left:401.29999999999995px;top:25.5px;font-size:6px;line-height:6px;height:13px;color:#333;font-weight:700">P<br>A</div>
<div class="a" style="left:422px;top:27px;width:12px;height:11px;background:#efefef;border-radius:3px"></div>
<div class="a" style="left:37.5px;top:26.0px;width:1.0px;height:13.0px;background:#cfcfcf"></div>
<div class="a" style="left:92.0px;top:26.0px;width:1.0px;height:13.0px;background:#cfcfcf"></div>
<div class="a" style="left:132.5px;top:26.0px;width:1.0px;height:13.0px;background:#cfcfcf"></div>
<div class="a" style="left:186.5px;top:26.0px;width:1.0px;height:13.0px;background:#cfcfcf"></div>
<div class="a" style="left:207.0px;top:26.0px;width:1.0px;height:13.0px;background:#cfcfcf"></div>
<div class="a" style="left:228.0px;top:26.0px;width:1.0px;height:13.0px;background:#cfcfcf"></div>
<div class="a" style="left:249.8px;top:26.0px;width:1.0px;height:13.0px;background:#cfcfcf"></div>
<div class="a" style="left:287.7px;top:26.0px;width:1.0px;height:13.0px;background:#cfcfcf"></div>
<div class="a" style="left:309.7px;top:26.0px;width:1.0px;height:13.0px;background:#cfcfcf"></div>
<div class="a" style="left:361.0px;top:26.0px;width:1.0px;height:13.0px;background:#cfcfcf"></div>
<div class="a" style="left:417.0px;top:26.0px;width:1.0px;height:13.0px;background:#cfcfcf"></div>
<div class="a" style="left:438.0px;top:26.0px;width:1.0px;height:13.0px;background:#cfcfcf"></div>
<div class="t" style="left:445.5px;top:26.5px;font-size:7px;line-height:9px;height:9px;color:#333;font-family:'Liberation Serif',serif;font-weight:700">abc</div>
<div class="a" style="left:982.0px;top:4.5px;width:5.0px;height:1.0px;background:#555"></div>
<div class="a" style="left:1004.5px;top:2.5px;width:5px;height:5px;border:1px solid #555"></div>
<svg style="left:1029px;top:2px" width="6" height="6"><path d="M0 0 L6 6 M6 0 L0 6" stroke="#555" stroke-width="1"/></svg>
<div class="a" style="left:15.0px;top:50.0px;width:55.5px;height:20.4px;border:1px solid #0a8a0a"></div>
<div class="a" style="left:119.4px;top:50.0px;width:95.3px;height:20.4px;border:1px solid #0a8a0a"></div>
<div class="a" style="left:366.0px;top:50.0px;width:277.0px;height:20.4px;border:1px solid #0a8a0a"></div>
<div class="a" style="left:822.0px;top:50.0px;width:200.7px;height:20.4px;border:1px solid #0a8a0a"></div>
<div class="a" style="left:13.3px;top:69.4px;width:983.2px;height:42.0px;border:1px solid #0a8a0a"></div>
<div class="a" style="left:13.3px;top:111.4px;width:1021.7px;height:53.6px;border:1px solid #0a8a0a"></div>
<div class="a" style="left:2.0px;top:68.0px;width:13.0px;height:2.0px;background:#959595"></div>
<div class="tz" style="left:2.5px;top:50.2px"> IS05    IN05GEA            INTERNATIONAL SYSTEMS              WE01    27APR24</div>
<div class="tz" style="left:2.5px;top:70.8px"> SIN SINGH                 SHIPMENT INQUIRY DETAIL              IN/IN0849</div>
<div class="tz" style="left:2.5px;top:91.4px"> SHIPMENT ID: 1771 3YTS MGS    PCS : 00001   IMPT GTWY: IN003  EXPT GTWY: TW</div>
<div class="tz" style="left:2.5px;top:112.1px"> CUSTOMS NO:             PORT ENT: IN 0849 DEL HUB &amp; B PORT ORIG\EXP:      8879</div>
<div class="tz" style="left:2.5px;top:132.7px"> SHPR CNTCT: MIN-CHENG YANG             REF:              REF:</div>
<div class="t" style="left:781px;top:109px;font-size:18.6px;line-height:22px;height:22px;color:rgba(255,255,255,.62);--w:156;letter-spacing:0.578px">Activate Windows</div>
<div class="t" style="left:781px;top:133.5px;font-size:14.8px;line-height:18px;height:18px;color:rgba(255,255,255,.62);--w:235;letter-spacing:0.041px">Go to Settings to activate Windows.</div>
</div>
<div class="a" style="left:1263px;top:785px;width:17px;height:156px;background:#f0f0f0"></div>
<div class="a" style="left:1264px;top:803px;width:15px;height:31px;background:#cdcdcd"></div>
<svg style="left:1267px;top:791px" width="9" height="6"><path d="M0.7 5.3 L4.5 1.5 L8.3 5.3" stroke="#505050" stroke-width="1.6" fill="none"/></svg>
<svg style="left:1267px;top:929px" width="9" height="6"><path d="M0.7 0.7 L4.5 4.5 L8.3 0.7" stroke="#505050" stroke-width="1.6" fill="none"/></svg>
<div class="a" style="left:211px;top:941px;width:1069px;height:43px;background:#fff"></div>
<div class="a" style="left:215px;top:948px;width:99px;height:29.5px;background:#cdd8e4"></div>
<svg style="left:223px;top:955px" width="16" height="16"><circle cx="6.6" cy="6.6" r="5.6" stroke="#4b5a70" stroke-width="1.5" fill="none"/><path d="M10.8 10.8 L15 15" stroke="#4b5a70" stroke-width="1.8"/><path d="M6.6 3.8 V9.4 M3.8 6.6 H9.4" stroke="#4b5a70" stroke-width="1.4"/></svg>
<div class="t" style="left:245px;top:955.5px;font-size:12px;--w:61;letter-spacing:-0.116px">Zoom Pane</div>
<svg style="left:1100px;top:955px" width="14" height="14"><rect x="0.5" y="0.5" width="13" height="13" fill="none" stroke="#4b5a70" stroke-width="1.3" stroke-dasharray="1.6 1.4"/></svg>
<div class="a" style="left:1133px;top:951px;width:60px;height:23px;background:#fff;border:1px solid #6a6a6a"></div>
<div class="t" style="left:1138.5px;top:955px;font-size:11px;--w:27.7;letter-spacing:-0.110px">153%</div>
<svg style="left:1179.5px;top:960.5px" width="9" height="6"><path d="M0.5 0.5 L4.5 4.5 L8.5 0.5" stroke="#444" stroke-width="1.1" fill="none"/></svg>
<div class="a" style="left:1212px;top:962px;width:14px;height:1.6px;background:#4b5a70"></div>
<div class="a" style="left:1253px;top:962px;width:14px;height:1.6px;background:#4b5a70"></div>
<div class="a" style="left:1259.2px;top:955.8px;width:1.6px;height:14px;background:#4b5a70"></div><!--ZOOMPANE_END-->
<!--PAGES_START--><!-- sidebar -->
<div class="a" style="left:0;top:98px;width:46px;height:45px;background:#1f5d8f"></div>
<svg style="left:14px;top:952px" width="19" height="18"><path d="M9.5 1 L18 16.5 H1 Z" fill="#3f6283" stroke="#3f6283" stroke-width="1.5" stroke-linejoin="round"/><path d="M9.5 6.5 V11.5" stroke="#0e3b5e" stroke-width="1.8"/><circle cx="9.5" cy="14" r="1" fill="#0e3b5e"/></svg>
<!-- pages panel -->
<div class="a" style="left:46px;top:96px;width:146px;height:870px;overflow:hidden">
<div class="a" style="left:22px;top:429px;width:106px;height:147px;background:#e2e2e2;border:3px solid #8eaed6"></div>
<div class="a" style="left:25px;top:474px;width:100px;height:4px;background:#f4f4f4"></div>
<div class="a" style="left:25px;top:478px;width:100px;height:48.6px;background:#050505;overflow:hidden">
<div class="a" style="left:31px;top:3.1px;width:9px;height:1px;background:#e8e8e8;opacity:0.4"></div>
<div class="a" style="left:42px;top:3.1px;width:9px;height:1px;background:#e8e8e8;opacity:0.55"></div>
<div class="a" style="left:82px;top:3.1px;width:9px;height:1px;background:#e8e8e8;opacity:0.75"></div>
<div class="a" style="left:3px;top:5.2px;width:9px;height:1px;background:#e8e8e8;opacity:0.75"></div>
<div class="a" style="left:37px;top:5.2px;width:20px;height:1px;background:#e8e8e8;opacity:0.55"></div>
<div class="a" style="left:59px;top:5.2px;width:16px;height:1px;background:#e8e8e8;opacity:0.55"></div>
<div class="a" style="left:80px;top:5.2px;width:16px;height:1px;background:#e8e8e8;opacity:0.4"></div>
<div class="a" style="left:3px;top:7.3px;width:12px;height:1px;background:#e8e8e8;opacity:0.75"></div>
<div class="a" style="left:20px;top:7.3px;width:16px;height:1px;background:#e8e8e8;opacity:0.75"></div>
<div class="a" style="left:38px;top:7.3px;width:12px;height:1px;background:#e8e8e8;opacity:0.75"></div>
<div class="a" style="left:85px;top:7.3px;width:9px;height:1px;background:#e8e8e8;opacity:0.55"></div>
<div class="a" style="left:3px;top:9.4px;width:16px;height:1px;background:#e8e8e8;opacity:0.75"></div>
<div class="a" style="left:27px;top:9.4px;width:12px;height:1px;background:#e8e8e8;opacity:0.55"></div>
<div class="a" style="left:41px;top:9.4px;width:9px;height:1px;background:#e8e8e8;opacity:0.4"></div>
<div class="a" style="left:72px;top:9.4px;width:24px;height:1px;background:#e8e8e8;opacity:0.75"></div>
<div class="a" style="left:3px;top:11.5px;width:20px;height:1px;background:#e8e8e8;opacity:0.4"></div>
<div class="a" style="left:26px;top:11.5px;width:20px;height:1px;background:#e8e8e8;opacity:0.55"></div>
<div class="a" style="left:48px;top:11.5px;width:12px;height:1px;background:#e8e8e8;opacity:0.4"></div>
<div class="a" style="left:83px;top:11.5px;width:13px;height:1px;background:#e8e8e8;opacity:0.75"></div>
<div class="a" style="left:3px;top:13.6px;width:12px;height:1px;background:#e8e8e8;opacity:0.55"></div>
<div class="a" style="left:18px;top:13.6px;width:9px;height:1px;background:#e8e8e8;opacity:0.55"></div>
<div class="a" style="left:29px;top:13.6px;width:16px;height:1px;background:#e8e8e8;opacity:0.55"></div>
<div class="a" style="left:48px;top:13.6px;width:6px;height:1px;background:#e8e8e8;opacity:0.75"></div>
<div class="a" style="left:57px;top:13.6px;width:28px;height:1px;background:#e8e8e8;opacity:0.75"></div>
<div class="a" style="left:3px;top:15.7px;width:6px;height:1px;background:#e8e8e8;opacity:0.55"></div>
<div class="a" style="left:26px;top:15.7px;width:12px;height:1px;background:#e8e8e8;opacity:0.75"></div>
<div class="a" style="left:40px;top:15.7px;width:28px;height:1px;background:#e8e8e8;opacity:0.55"></div>
<div class="a" style="left:71px;top:15.7px;width:12px;height:1px;background:#e8e8e8;opacity:0.75"></div>
<div class="a" style="left:88px;top:15.7px;width:8px;height:1px;background:#e8e8e8;opacity:0.55"></div>
<div class="a" style="left:3px;top:17.8px;width:6px;height:1px;background:#e8e8e8;opacity:0.55"></div>
<div class="a" style="left:45px;top:17.8px;width:6px;height:1px;background:#e8e8e8;opacity:0.4"></div>
<div class="a" style="left:53px;top:17.8px;width:12px;height:1px;background:#e8e8e8;opacity:0.55"></div>
<div class="a" style="left:70px;top:17.8px;width:16px;height:1px;background:#e8e8e8;opacity:0.4"></div>
<div class="a" style="left:88px;top:17.8px;width:8px;height:1px;background:#e8e8e8;opacity:0.55"></div>
<div class="a" style="left:3px;top:19.9px;width:6px;height:1px;background:#e8e8e8;opacity:0.55"></div>
<div class="a" style="left:11px;top:19.9px;width:16px;height:1px;background:#e8e8e8;opacity:0.75"></div>
<div class="a" style="left:50px;top:19.9px;width:20px;height:1px;background:#e8e8e8;opacity:0.55"></div>
<div class="a" style="left:75px;top:19.9px;width:6px;height:1px;background:#e8e8e8;opacity:0.4"></div>
<div class="a" style="left:92px;top:19.9px;width:4px;height:1px;background:#e8e8e8;opacity:0.75"></div>
<div class="a" style="left:34px;top:22.0px;width:12px;height:1px;background:#e8e8e8;opacity:0.55"></div>
<div class="a" style="left:51px;top:22.0px;width:28px;height:1px;background:#e8e8e8;opacity:0.55"></div>
<div class="a" style="left:82px;top:22.0px;width:9px;height:1px;background:#e8e8e8;opacity:0.4"></div>
<div class="a" style="left:31px;top:24.1px;width:9px;height:1px;background:#e8e8e8;opacity:0.4"></div>
<div class="a" style="left:45px;top:24.1px;width:28px;height:1px;background:#e8e8e8;opacity:0.75"></div>
<div class="a" style="left:78px;top:24.1px;width:6px;height:1px;background:#e8e8e8;opacity:0.55"></div>
<div class="a" style="left:86px;top:24.1px;width:10px;height:1px;background:#e8e8e8;opacity:0.4"></div>
<div class="a" style="left:3px;top:26.2px;width:20px;height:1px;background:#e8e8e8;opacity:0.75"></div>
<div class="a" style="left:31px;top:26.2px;width:16px;height:1px;background:#e8e8e8;opacity:0.75"></div>
<div class="a" style="left:55px;top:26.2px;width:28px;height:1px;background:#e8e8e8;opacity:0.55"></div>
<div class="a" style="left:91px;top:26.2px;width:5px;height:1px;background:#e8e8e8;opacity:0.55"></div>
<div class="a" style="left:3px;top:28.3px;width:12px;height:1px;background:#e8e8e8;opacity:0.4"></div>
<div class="a" style="left:18px;top:28.3px;width:28px;height:1px;background:#e8e8e8;opacity:0.4"></div>
<div class="a" style="left:51px;top:28.3px;width:20px;height:1px;background:#e8e8e8;opacity:0.4"></div>
<div class="a" style="left:79px;top:28.3px;width:6px;height:1px;background:#e8e8e8;opacity:0.55"></div>
<div class="a" style="left:87px;top:28.3px;width:9px;height:1px;background:#e8e8e8;opacity:0.75"></div>
<div class="a" style="left:3px;top:30.4px;width:12px;height:1px;background:#e8e8e8;opacity:0.55"></div>
<div class="a" style="left:17px;top:30.4px;width:16px;height:1px;background:#e8e8e8;opacity:0.75"></div>
<div class="a" style="left:36px;top:30.4px;width:9px;height:1px;background:#e8e8e8;opacity:0.4"></div>
<div class="a" style="left:47px;top:30.4px;width:20px;height:1px;background:#e8e8e8;opacity:0.4"></div>
<div class="a" style="left:70px;top:30.4px;width:20px;height:1px;background:#e8e8e8;opacity:0.4"></div>
<div class="a" style="left:93px;top:30.4px;width:3px;height:1px;background:#e8e8e8;opacity:0.4"></div>
<div class="a" style="left:3px;top:32.5px;width:16px;height:1px;background:#e8e8e8;opacity:0.75"></div>
<div class="a" style="left:22px;top:32.5px;width:12px;height:1px;background:#e8e8e8;opacity:0.55"></div>
<div class="a" style="left:42px;top:32.5px;width:20px;height:1px;background:#e8e8e8;opacity:0.4"></div>
<div class="a" style="left:67px;top:32.5px;width:28px;height:1px;background:#e8e8e8;opacity:0.4"></div>
<div class="a" style="left:3px;top:34.6px;width:6px;height:1px;background:#e8e8e8;opacity:0.75"></div>
<div class="a" style="left:12px;top:34.6px;width:28px;height:1px;background:#e8e8e8;opacity:0.55"></div>
<div class="a" style="left:45px;top:34.6px;width:16px;height:1px;background:#e8e8e8;opacity:0.55"></div>
<div class="a" style="left:64px;top:34.6px;width:6px;height:1px;background:#e8e8e8;opacity:0.4"></div>
<div class="a" style="left:83px;top:34.6px;width:13px;height:1px;background:#e8e8e8;opacity:0.55"></div>
<div class="a" style="left:3px;top:36.7px;width:28px;height:1px;background:#e8e8e8;opacity:0.4"></div>
<div class="a" style="left:63px;top:36.7px;width:6px;height:1px;background:#e8e8e8;opacity:0.4"></div>
<div class="a" style="left:71px;top:36.7px;width:16px;height:1px;background:#e8e8e8;opacity:0.55"></div>
<div class="a" style="left:3px;top:45.1px;width:12px;height:1px;background:#e8e8e8;opacity:0.4"></div>
<div class="a" style="left:23px;top:45.1px;width:20px;height:1px;background:#e8e8e8;opacity:0.75"></div>
<div class="a" style="left:74px;top:45.1px;width:9px;height:1px;background:#e8e8e8;opacity:0.75"></div>
<div class="a" style="left:85px;top:45.1px;width:11px;height:1px;background:#e8e8e8;opacity:0.75"></div>
</div>
<div class="a" style="left:25px;top:526.6px;width:100px;height:2px;background:#eee"></div>
<div class="a" style="left:25px;top:528.6px;width:100px;height:2.5px;background:linear-gradient(90deg,#9aa3ad 0,#9aa3ad 80%,#c9a0a8 80%)"></div>
<svg style="left:26px;top:556.0px" width="14" height="16"><rect x="1" y="1" width="12" height="14" fill="#fff" stroke="#4b5a70" stroke-width="2"/><path d="M4 5 H10 M4 7.6 H10 M4 10.2 H8.6" stroke="#4b5a70" stroke-width="1.2"/></svg>
<div class="t" style="left:23px;top:580px;width:105px;text-align:center;font-size:12px">3</div>
<div class="a" style="left:22px;top:605px;width:106px;height:147px;background:#e2e2e2;border:3px solid #8eaed6"></div>
<div class="a" style="left:25px;top:650px;width:100px;height:4px;background:#f4f4f4"></div>
<div class="a" style="left:25px;top:654px;width:100px;height:48.6px;background:#050505;overflow:hidden">
<div class="a" style="left:3px;top:3.1px;width:28px;height:1px;background:#e8e8e8;opacity:0.4"></div>
<div class="a" style="left:33px;top:3.1px;width:6px;height:1px;background:#e8e8e8;opacity:0.75"></div>
<div class="a" style="left:42px;top:3.1px;width:20px;height:1px;background:#e8e8e8;opacity:0.55"></div>
<div class="a" style="left:70px;top:3.1px;width:20px;height:1px;background:#e8e8e8;opacity:0.4"></div>
<div class="a" style="left:95px;top:3.1px;width:1px;height:1px;background:#e8e8e8;opacity:0.55"></div>
<div class="a" style="left:3px;top:5.2px;width:16px;height:1px;background:#e8e8e8;opacity:0.4"></div>
<div class="a" style="left:24px;top:5.2px;width:12px;height:1px;background:#e8e8e8;opacity:0.75"></div>
<div class="a" style="left:41px;top:5.2px;width:9px;height:1px;background:#e8e8e8;opacity:0.75"></div>
<div class="a" style="left:52px;top:5.2px;width:20px;height:1px;background:#e8e8e8;opacity:0.4"></div>
<div class="a" style="left:80px;top:5.2px;width:9px;height:1px;background:#e8e8e8;opacity:0.75"></div>
<div class="a" style="left:92px;top:5.2px;width:4px;height:1px;background:#e8e8e8;opacity:0.75"></div>
<div class="a" style="left:3px;top:7.3px;width:28px;height:1px;background:#e8e8e8;opacity:0.4"></div>
<div class="a" style="left:36px;top:7.3px;width:9px;height:1px;background:#e8e8e8;opacity:0.55"></div>
<div class="a" style="left:53px;top:7.3px;width:16px;height:1px;background:#e8e8e8;opacity:0.4"></div>
<div class="a" style="left:71px;top:7.3px;width:25px;height:1px;background:#e8e8e8;opacity:0.4"></div>
<div class="a" style="left:3px;top:9.4px;width:16px;height:1px;background:#e8e8e8;opacity:0.4"></div>
<div class="a" style="left:24px;top:9.4px;width:9px;height:1px;background:#e8e8e8;opacity:0.55"></div>
<div class="a" style="left:41px;top:9.4px;width:28px;height:1px;background:#e8e8e8;opacity:0.75"></div>
<div class="a" style="left:3px;top:11.5px;width:28px;height:1px;background:#e8e8e8;opacity:0.4"></div>
<div class="a" style="left:34px;top:11.5px;width:9px;height:1px;background:#e8e8e8;opacity:0.55"></div>
<div class="a" style="left:45px;top:11.5px;width:6px;height:1px;background:#e8e8e8;opacity:0.4"></div>
<div class="a" style="left:53px;top:11.5px;width:20px;height:1px;background:#e8e8e8;opacity:0.55"></div>
<div class="a" style="left:95px;top:11.5px;width:1px;height:1px;background:#e8e8e8;opacity:0.55"></div>
<div class="a" style="left:3px;top:13.6px;width:6px;height:1px;background:#e8e8e8;opacity:0.55"></div>
<div class="a" style="left:12px;top:13.6px;width:28px;height:1px;background:#e8e8e8;opacity:0.4"></div>
<div class="a" style="left:42px;top:13.6px;width:28px;height:1px;background:#e8e8e8;opacity:0.4"></div>
<div class="a" style="left:72px;top:13.6px;width:12px;height:1px;background:#e8e8e8;opacity:0.55"></div>
<div class="a" style="left:87px;top:13.6px;width:9px;height:1px;background:#e8e8e8;opacity:0.75"></div>
<div class="a" style="left:12px;top:15.7px;width:16px;height:1px;background:#e8e8e8;opacity:0.4"></div>
<div class="a" style="left:36px;top:15.7px;width:12px;height:1px;background:#e8e8e8;opacity:0.55"></div>
<div class="a" style="left:56px;top:15.7px;width:28px;height:1px;background:#e8e8e8;opacity:0.55"></div>
<div class="a" style="left:86px;top:15.7px;width:6px;height:1px;background:#e8e8e8;opacity:0.55"></div>
<div class="a" style="left:12px;top:17.8px;width:28px;height:1px;background:#e8e8e8;opacity:0.4"></div>
<div class="a" style="left:92px;top:17.8px;width:4px;height:1px;background:#e8e8e8;opacity:0.55"></div>
<div class="a" style="left:3px;top:19.9px;width:9px;height:1px;background:#e8e8e8;opacity:0.4"></div>
<div class="a" style="left:14px;top:19.9px;width:20px;height:1px;background:#e8e8e8;opacity:0.55"></div>
<div class="a" style="left:82px;top:19.9px;width:14px;height:1px;background:#e8e8e8;opacity:0.75"></div>
<div class="a" style="left:3px;top:22.0px;width:6px;height:1px;background:#e8e8e8;opacity:0.75"></div>
<div class="a" style="left:17px;top:22.0px;width:12px;height:1px;background:#e8e8e8;opacity:0.75"></div>
<div class="a" style="left:49px;top:22.0px;width:20px;height:1px;background:#e8e8e8;opacity:0.4"></div>
<div class="a" style="left:85px;top:22.0px;width:11px;height:1px;background:#e8e8e8;opacity:0.55"></div>
<div class="a" style="left:3px;top:24.1px;width:28px;height:1px;background:#e8e8e8;opacity:0.4"></div>
<div class="a" style="left:39px;top:24.1px;width:9px;height:1px;background:#e8e8e8;opacity:0.4"></div>
<div class="a" style="left:50px;top:24.1px;width:20px;height:1px;background:#e8e8e8;opacity:0.4"></div>
<div class="a" style="left:72px;top:24.1px;width:24px;height:1px;background:#e8e8e8;opacity:0.75"></div>
<div class="a" style="left:15px;top:26.2px;width:16px;height:1px;background:#e8e8e8;opacity:0.75"></div>
<div class="a" style="left:39px;top:26.2px;width:6px;height:1px;background:#e8e8e8;opacity:0.55"></div>
<div class="a" style="left:50px;top:26.2px;width:20px;height:1px;background:#e8e8e8;opacity:0.4"></div>
<div class="a" style="left:78px;top:26.2px;width:6px;height:1px;background:#e8e8e8;opacity:0.75"></div>
<div class="a" style="left:87px;top:26.2px;width:9px;height:1px;background:#e8e8e8;opacity:0.55"></div>
<div class="a" style="left:3px;top:28.3px;width:9px;height:1px;background:#e8e8e8;opacity:0.4"></div>
<div class="a" style="left:17px;top:28.3px;width:20px;height:1px;background:#e8e8e8;opacity:0.4"></div>
<div class="a" style="left:50px;top:28.3px;width:20px;height:1px;background:#e8e8e8;opacity:0.75"></div>
<div class="a" style="left:73px;top:28.3px;width:23px;height:1px;background:#e8e8e8;opacity:0.4"></div>
<div class="a" style="left:3px;top:30.4px;width:16px;height:1px;background:#e8e8e8;opacity:0.4"></div>
<div class="a" style="left:39px;top:30.4px;width:6px;height:1px;background:#e8e8e8;opacity:0.55"></div>
<div class="a" style="left:70px;top:30.4px;width:6px;height:1px;background:#e8e8e8;opacity:0.75"></div>
<div class="a" style="left:92px;top:30.4px;width:4px;height:1px;background:#e8e8e8;opacity:0.55"></div>
<div class="a" style="left:34px;top:32.5px;width:16px;height:1px;background:#e8e8e8;opacity:0.75"></div>
<div class="a" style="left:55px;top:32.5px;width:9px;height:1px;background:#e8e8e8;opacity:0.75"></div>
<div class="a" style="left:69px;top:32.5px;width:27px;height:1px;background:#e8e8e8;opacity:0.55"></div>
<div class="a" style="left:3px;top:34.6px;width:20px;height:1px;background:#e8e8e8;opacity:0.55"></div>
<div class="a" style="left:70px;top:34.6px;width:20px;height:1px;background:#e8e8e8;opacity:0.55"></div>
<div class="a" style="left:92px;top:34.6px;width:4px;height:1px;background:#e8e8e8;opacity:0.55"></div>
<div class="a" style="left:3px;top:36.7px;width:20px;height:1px;background:#e8e8e8;opacity:0.55"></div>
<div class="a" style="left:25px;top:36.7px;width:28px;height:1px;background:#e8e8e8;opacity:0.4"></div>
<div class="a" style="left:58px;top:36.7px;width:20px;height:1px;background:#e8e8e8;opacity:0.4"></div>
<div class="a" style="left:81px;top:36.7px;width:12px;height:1px;background:#e8e8e8;opacity:0.55"></div>
<div class="a" style="left:95px;top:36.7px;width:1px;height:1px;background:#e8e8e8;opacity:0.55"></div>
<div class="a" style="left:15px;top:45.1px;width:9px;height:1px;background:#e8e8e8;opacity:0.55"></div>
<div class="a" style="left:26px;top:45.1px;width:12px;height:1px;background:#e8e8e8;opacity:0.55"></div>
<div class="a" style="left:46px;top:45.1px;width:12px;height:1px;background:#e8e8e8;opacity:0.55"></div>
<div class="a" style="left:93px;top:45.1px;width:3px;height:1px;background:#e8e8e8;opacity:0.55"></div>
</div>
<div class="a" style="left:25px;top:702.6px;width:100px;height:2px;background:#eee"></div>
<div class="a" style="left:25px;top:704.6px;width:100px;height:2.5px;background:linear-gradient(90deg,#9aa3ad 0,#9aa3ad 80%,#c9a0a8 80%)"></div>
<svg style="left:26px;top:731.8px" width="14" height="16"><rect x="1" y="1" width="12" height="14" fill="#fff" stroke="#4b5a70" stroke-width="2"/><path d="M4 5 H10 M4 7.6 H10 M4 10.2 H8.6" stroke="#4b5a70" stroke-width="1.2"/></svg>
<div class="t" style="left:23px;top:756px;width:105px;text-align:center;font-size:12px">4</div>
<div class="a" style="left:22px;top:781.5px;width:106px;height:147px;background:#e2e2e2;border:3px solid #8eaed6"></div>
<div class="a" style="left:25px;top:826px;width:100px;height:4px;background:#f4f4f4"></div>
<div class="a" style="left:25px;top:830px;width:100px;height:48.6px;background:#050505;overflow:hidden">
<div class="a" style="left:44px;top:3.1px;width:12px;height:1px;background:#e8e8e8;opacity:0.55"></div>
<div class="a" style="left:3px;top:5.2px;width:16px;height:1px;background:#e8e8e8;opacity:0.75"></div>
<div class="a" style="left:27px;top:5.2px;width:9px;height:1px;background:#e8e8e8;opacity:0.55"></div>
<div class="a" style="left:38px;top:5.2px;width:12px;height:1px;background:#e8e8e8;opacity:0.55"></div>
<div class="a" style="left:53px;top:5.2px;width:12px;height:1px;background:#e8e8e8;opacity:0.55"></div>
<div class="a" style="left:80px;top:5.2px;width:16px;height:1px;background:#e8e8e8;opacity:0.75"></div>
<div class="a" style="left:3px;top:7.3px;width:28px;height:1px;background:#e8e8e8;opacity:0.4"></div>
<div class="a" style="left:39px;top:7.3px;width:20px;height:1px;background:#e8e8e8;opacity:0.4"></div>
<div class="a" style="left:62px;top:7.3px;width:28px;height:1px;background:#e8e8e8;opacity:0.4"></div>
<div class="a" style="left:95px;top:7.3px;width:1px;height:1px;background:#e8e8e8;opacity:0.75"></div>
<div class="a" style="left:3px;top:9.4px;width:20px;height:1px;background:#e8e8e8;opacity:0.75"></div>
<div class="a" style="left:26px;top:9.4px;width:9px;height:1px;background:#e8e8e8;opacity:0.55"></div>
<div class="a" style="left:61px;top:9.4px;width:20px;height:1px;background:#e8e8e8;opacity:0.75"></div>
<div class="a" style="left:3px;top:11.5px;width:9px;height:1px;background:#e8e8e8;opacity:0.75"></div>
<div class="a" style="left:14px;top:11.5px;width:6px;height:1px;background:#e8e8e8;opacity:0.4"></div>
<div class="a" style="left:28px;top:11.5px;width:16px;height:1px;background:#e8e8e8;opacity:0.75"></div>
<div class="a" style="left:52px;top:11.5px;width:20px;height:1px;background:#e8e8e8;opacity:0.55"></div>
<div class="a" style="left:74px;top:11.5px;width:12px;height:1px;background:#e8e8e8;opacity:0.4"></div>
<div class="a" style="left:89px;top:11.5px;width:7px;height:1px;background:#e8e8e8;opacity:0.55"></div>
<div class="a" style="left:27px;top:13.6px;width:12px;height:1px;background:#e8e8e8;opacity:0.75"></div>
<div class="a" style="left:42px;top:13.6px;width:12px;height:1px;background:#e8e8e8;opacity:0.4"></div>
<div class="a" style="left:59px;top:13.6px;width:28px;height:1px;background:#e8e8e8;opacity:0.75"></div>
<div class="a" style="left:90px;top:13.6px;width:6px;height:1px;background:#e8e8e8;opacity:0.75"></div>
<div class="a" style="left:3px;top:15.7px;width:28px;height:1px;background:#e8e8e8;opacity:0.75"></div>
<div class="a" style="left:34px;top:15.7px;width:6px;height:1px;background:#e8e8e8;opacity:0.4"></div>
<div class="a" style="left:42px;top:15.7px;width:20px;height:1px;background:#e8e8e8;opacity:0.75"></div>
<div class="a" style="left:3px;top:17.8px;width:6px;height:1px;background:#e8e8e8;opacity:0.4"></div>
<div class="a" style="left:11px;top:17.8px;width:9px;height:1px;background:#e8e8e8;opacity:0.75"></div>
<div class="a" style="left:28px;top:17.8px;width:12px;height:1px;background:#e8e8e8;opacity:0.55"></div>
<div class="a" style="left:76px;top:17.8px;width:9px;height:1px;background:#e8e8e8;opacity:0.75"></div>
<div class="a" style="left:3px;top:19.9px;width:12px;height:1px;background:#e8e8e8;opacity:0.55"></div>
<div class="a" style="left:18px;top:19.9px;width:6px;height:1px;background:#e8e8e8;opacity:0.55"></div>
<div class="a" style="left:29px;top:19.9px;width:28px;height:1px;background:#e8e8e8;opacity:0.75"></div>
<div class="a" style="left:60px;top:19.9px;width:6px;height:1px;background:#e8e8e8;opacity:0.55"></div>
<div class="a" style="left:26px;top:22.0px;width:16px;height:1px;background:#e8e8e8;opacity:0.55"></div>
<div class="a" style="left:68px;top:22.0px;width:20px;height:1px;background:#e8e8e8;opacity:0.55"></div>
<div class="a" style="left:93px;top:22.0px;width:3px;height:1px;background:#e8e8e8;opacity:0.55"></div>
<div class="a" style="left:3px;top:24.1px;width:28px;height:1px;background:#e8e8e8;opacity:0.75"></div>
<div class="a" style="left:34px;top:24.1px;width:9px;height:1px;background:#e8e8e8;opacity:0.75"></div>
<div class="a" style="left:45px;top:24.1px;width:6px;height:1px;background:#e8e8e8;opacity:0.4"></div>
<div class="a" style="left:56px;top:24.1px;width:6px;height:1px;background:#e8e8e8;opacity:0.55"></div>
<div class="a" style="left:64px;top:24.1px;width:20px;height:1px;background:#e8e8e8;opacity:0.75"></div>
<div class="a" style="left:89px;top:24.1px;width:7px;height:1px;background:#e8e8e8;opacity:0.55"></div>
<div class="a" style="left:49px;top:26.2px;width:6px;height:1px;background:#e8e8e8;opacity:0.4"></div>
<div class="a" style="left:57px;top:26.2px;width:9px;height:1px;background:#e8e8e8;opacity:0.75"></div>
<div class="a" style="left:74px;top:26.2px;width:22px;height:1px;background:#e8e8e8;opacity:0.55"></div>
<div class="a" style="left:3px;top:28.3px;width:6px;height:1px;background:#e8e8e8;opacity:0.75"></div>
<div class="a" style="left:17px;top:28.3px;width:12px;height:1px;background:#e8e8e8;opacity:0.55"></div>
<div class="a" style="left:31px;top:28.3px;width:28px;height:1px;background:#e8e8e8;opacity:0.4"></div>
<div class="a" style="left:62px;top:28.3px;width:12px;height:1px;background:#e8e8e8;opacity:0.55"></div>
<div class="a" style="left:77px;top:28.3px;width:19px;height:1px;background:#e8e8e8;opacity:0.4"></div>
<div class="a" style="left:3px;top:30.4px;width:20px;height:1px;background:#e8e8e8;opacity:0.55"></div>
<div class="a" style="left:42px;top:30.4px;width:12px;height:1px;background:#e8e8e8;opacity:0.55"></div>
<div class="a" style="left:56px;top:30.4px;width:16px;height:1px;background:#e8e8e8;opacity:0.75"></div>
<div class="a" style="left:75px;top:30.4px;width:16px;height:1px;background:#e8e8e8;opacity:0.4"></div>
<div class="a" style="left:94px;top:30.4px;width:2px;height:1px;background:#e8e8e8;opacity:0.75"></div>
<div class="a" style="left:14px;top:32.5px;width:9px;height:1px;background:#e8e8e8;opacity:0.4"></div>
<div class="a" style="left:25px;top:32.5px;width:12px;height:1px;background:#e8e8e8;opacity:0.55"></div>
<div class="a" style="left:42px;top:32.5px;width:28px;height:1px;background:#e8e8e8;opacity:0.4"></div>
<div class="a" style="left:15px;top:34.6px;width:28px;height:1px;background:#e8e8e8;opacity:0.75"></div>
<div class="a" style="left:45px;top:34.6px;width:20px;height:1px;background:#e8e8e8;opacity:0.4"></div>
<div class="a" style="left:73px;top:34.6px;width:6px;height:1px;background:#e8e8e8;opacity:0.4"></div>
<div class="a" style="left:84px;top:34.6px;width:12px;height:1px;background:#e8e8e8;opacity:0.55"></div>
<div class="a" style="left:3px;top:36.7px;width:16px;height:1px;background:#e8e8e8;opacity:0.75"></div>
<div class="a" style="left:27px;top:36.7px;width:12px;height:1px;background:#e8e8e8;opacity:0.55"></div>
<div class="a" style="left:44px;top:36.7px;width:16px;height:1px;background:#e8e8e8;opacity:0.55"></div>
<div class="a" style="left:65px;top:36.7px;width:16px;height:1px;background:#e8e8e8;opacity:0.75"></div>
<div class="a" style="left:84px;top:36.7px;width:12px;height:1px;background:#e8e8e8;opacity:0.4"></div>
<div class="a" style="left:3px;top:45.1px;width:6px;height:1px;background:#e8e8e8;opacity:0.75"></div>
<div class="a" style="left:12px;top:45.1px;width:20px;height:1px;background:#e8e8e8;opacity:0.75"></div>
<div class="a" style="left:58px;top:45.1px;width:16px;height:1px;background:#e8e8e8;opacity:0.75"></div>
<div class="a" style="left:79px;top:45.1px;width:17px;height:1px;background:#e8e8e8;opacity:0.55"></div>
</div>
<div class="a" style="left:25px;top:878.6px;width:100px;height:2px;background:#eee"></div>
<div class="a" style="left:25px;top:880.6px;width:100px;height:2.5px;background:linear-gradient(90deg,#9aa3ad 0,#9aa3ad 80%,#c9a0a8 80%)"></div>
</div>
<div class="a" style="left:192px;top:98px;width:17px;height:868px;background:#f0f0f0;border-left:1px solid #fff"></div>
<svg style="left:196.5px;top:955px" width="9" height="6"><path d="M0.7 0.7 L4.5 4.5 L8.3 0.7" stroke="#505050" stroke-width="1.6" fill="none"/></svg>
<div class="a" style="left:46px;top:966px;width:164px;height:18px;background:#f0f0f0"></div>
<div class="a" style="left:64px;top:968px;width:108.5px;height:14px;background:#cdcdcd"></div>
<svg style="left:51px;top:970.5px" width="6" height="9"><path d="M5.3 0.7 L1.5 4.5 L5.3 8.3" stroke="#505050" stroke-width="1.6" fill="none"/></svg>
<svg style="left:181px;top:970.5px" width="6" height="9"><path d="M0.7 0.7 L4.5 4.5 L0.7 8.3" stroke="#505050" stroke-width="1.6" fill="none"/></svg><!--PAGES_END-->
<!-- ======= Save dialog ======= -->
<svg width="0" height="0" style="left:0;top:0">
 <defs>
  <symbol id="chrome" viewBox="0 0 16 16">
   <circle cx="8" cy="8" r="7.6" fill="#fff"/>
   <path d="M8 8 L1.42 4.2 A7.6 7.6 0 0 1 14.58 4.2 Z" fill="#e33b2e"/>
   <path d="M8 8 L14.58 4.2 A7.6 7.6 0 0 1 8 15.6 Z" fill="#fbc116"/>
   <path d="M8 8 L8 15.6 A7.6 7.6 0 0 1 1.42 4.2 Z" fill="#2da94f"/>
   <path d="M8 4.5 L14.7 4.5 A7.6 7.6 0 0 1 15.2 6 L8 8 Z" fill="#e33b2e"/>
   <path d="M11.03 9.75 L8 15.6 A7.6 7.6 0 0 0 14.58 4.4 Z" fill="#fbc116"/>
   <path d="M4.97 9.75 L8.2 15.6 A7.6 7.6 0 0 1 1.42 4.2 Z" fill="#2da94f"/>
   <circle cx="8" cy="8" r="3.6" fill="#fff"/>
   <circle cx="8" cy="8" r="2.8" fill="#3f7fe8"/>
  </symbol>
  <symbol id="fold" viewBox="0 0 14 18" preserveAspectRatio="none">
   <path d="M0.5 0.5 H11.5 Q13.5 0.5 13.5 2.5 V17.5 H0.5 Z" fill="#ffe699" stroke="#e8c65a" stroke-width="1"/>
   <path d="M10.5 17.5 V12.5 H13.5" fill="none" stroke="#e8c65a" stroke-width="1"/>
  </symbol>
  <symbol id="abbyy" viewBox="0 0 16 16">
   <rect width="16" height="16" fill="#a50f24"/>
   <path d="M8.78 2.00 A6.2 6.2 0 0 0 6.39 12.36" stroke="#fff" stroke-width="1.7" fill="none"/>
   <path d="M7.34 2.93 L5.84 0.69 M5.40 5.08 L3.02 3.82 M4.70 7.90 L2.00 7.90 M5.40 10.72 L3.02 11.98 " stroke="#fff" stroke-width="2.1" fill="none"/>
   <circle cx="10.7" cy="7.9" r="3.6" fill="#8e0a1c" stroke="#fff" stroke-width="1.6"/>
   <path d="M8.7 11.4 L7 14.9" stroke="#fff" stroke-width="1.6" fill="none"/>
  </symbol>
 </defs>
</svg>
<div class="a" id="dlg" style="left:7px;top:23px;width:626px;height:566px;background:#f0f0f0;border:1px solid #4a4a4a;box-shadow:0 2px 21px 0 rgba(0,0,0,.42)"></div>
<div class="a" style="left:8px;top:24px;width:624px;height:65px;background:#fff"></div>
<svg style="left:16px;top:30px" width="16" height="16"><use href="#abbyy"/></svg>
<div class="t" style="left:37px;top:32px;font-size:11.7px;--w:96;letter-spacing:-0.051px">Save document as</div>
<svg style="left:612px;top:33px" width="10" height="10"><path d="M0 0 L10 10 M10 0 L0 10" stroke="#000" stroke-width="1.1" fill="none"/></svg>
<!-- nav buttons -->
<svg style="left:21px;top:65px" width="12" height="12"><path d="M12 6 H1 M6 1 L1 6 L6 11" stroke="#c2c2c2" stroke-width="1.3" fill="none"/></svg>
<svg style="left:51px;top:65px" width="12" height="12"><path d="M0 6 H11 M6 1 L11 6 L6 11" stroke="#c2c2c2" stroke-width="1.3" fill="none"/></svg>
<svg style="left:77px;top:69px" width="6" height="4"><path d="M0 0 L3 3 L6 0" stroke="#c2c2c2" stroke-width="1" fill="none"/></svg>
<svg style="left:95px;top:64px" width="12" height="13"><path d="M6 13 V1 M1 6 L6 1 L11 6" stroke="#5c5c5c" stroke-width="1.4" fill="none"/></svg>
<!-- address box -->
<div class="a" style="left:114px;top:60px;width:292px;height:22px;background:#fff;border:1px solid #d9d9d9"></div>
<div class="a" style="left:385px;top:61px;width:1px;height:20px;background:#d9d9d9"></div>
<svg style="left:119px;top:62px" width="13" height="16.5"><use href="#fold"/></svg>
<div class="t" style="left:138px;top:64px;color:#444;font-size:11px">«</div>
<div class="t" style="left:154px;top:64px;--w:58.8;letter-spacing:0.160px">Downloads</div>
<svg style="left:222.5px;top:68px" width="5" height="7"><path d="M0.5 0.5 L3.6 3.5 L0.5 6.5" stroke="#555" stroke-width="1.1" fill="none"/></svg>
<div class="t" style="left:236px;top:64px;--w:50.8;letter-spacing:0.307px">pdfImage</div>
<svg style="left:371px;top:68px" width="9" height="6"><path d="M0.5 0.5 L4.5 4.5 L8.5 0.5" stroke="#444" stroke-width="1.4" fill="none"/></svg>
<svg style="left:391px;top:65px" width="11" height="12"><path d="M9.26 5.51 A4.2 4.2 0 1 1 5.93 2.46" stroke="#555" stroke-width="1.2" fill="none"/><path d="M9.13 3.36 L5.33 0.06 L5.33 5.06 Z" fill="#555"/></svg>
<!-- search box -->
<div class="a" style="left:418px;top:60px;width:202px;height:22px;background:#fff;border:1px solid #d9d9d9"></div>
<div class="t" style="left:427px;top:64px;color:#6d6d6d;--w:89;letter-spacing:0.047px">Search pdfImage</div>
<svg style="left:599px;top:65px" width="12" height="12"><circle cx="7.4" cy="4.6" r="3.5" stroke="#666" stroke-width="1.3" fill="none"/><path d="M4.8 7.2 L0.8 11.2" stroke="#666" stroke-width="1.6"/></svg>
<!-- command bar -->
<div class="a" style="left:8px;top:89px;width:624px;height:31px;background:#f5f6f7"></div>
<div class="t" style="left:26.5px;top:97px;color:#1c3664;--w:46.5;letter-spacing:-0.068px">Organize</div>
<svg style="left:79px;top:102px" width="7" height="4"><path d="M0 0 H7 L3.5 4 Z" fill="#1c3664"/></svg>
<div class="t" style="left:117.5px;top:97px;color:#1c3664;--w:57.5;letter-spacing:0.208px">New folder</div>
<svg style="left:538px;top:98px" width="17" height="12"><g stroke="#7a7a7a" stroke-width="1" fill="none"><rect x="0.5" y="0.5" width="3" height="11" stroke="#9a9a9a"/><path d="M5.5 1.5 H10 M12 1.5 H16.5 M5.5 5.5 H10 M12 5.5 H16.5 M5.5 9.5 H10 M12 9.5 H16.5"/></g><path d="M1.5 2 h1 M1.5 6 h1" stroke="#3b78c4"/><path d="M1.5 10 h1" stroke="#c43b3b"/></svg>
<svg style="left:563px;top:102px" width="8" height="4"><path d="M0 0 H8 L4 4 Z" fill="#1c3664"/></svg>
<svg style="left:601px;top:96px" width="16" height="16"><circle cx="8" cy="8" r="8" fill="#0b5cbf"/><text x="8" y="12.4" font-family="Liberation Sans,sans-serif" font-weight="700" font-size="12" fill="#fff" text-anchor="middle">?</text></svg>
<!-- nav pane -->
<div class="a" style="left:8px;top:120px;width:140px;height:290px;background:#fff"></div>
<div class="a" style="left:8px;top:376px;width:140px;height:24px;background:#d9d9d9"></div>
<div class="a" style="left:148px;top:120px;width:17px;height:290px;background:#f0f0f0"></div>
<div class="a" style="left:148px;top:196px;width:16px;height:109px;background:#cdcdcd"></div>
<svg style="left:152px;top:125px" width="9" height="6"><path d="M0.7 5.3 L4.5 1.5 L8.3 5.3" stroke="#505050" stroke-width="1.6" fill="none"/></svg>
<svg style="left:152px;top:398px" width="9" height="6"><path d="M0.7 0.7 L4.5 4.5 L8.3 0.7" stroke="#505050" stroke-width="1.6" fill="none"/></svg>
<div class="a" style="left:165px;top:120px;width:2px;height:290px;background:#fff"></div>
<svg style="left:41px;top:124px" width="15" height="15"><ellipse cx="7.5" cy="8.5" rx="7" ry="6.2" fill="#d8d8d8" stroke="#a9a9a9" stroke-width=".8"/><ellipse cx="7.5" cy="7.2" rx="6.6" ry="5.6" fill="#f1e7a8" stroke="#c9b94f" stroke-width=".8"/><path d="M7.5 7.2 L12 2.6 A6.6 5.6 0 0 1 14 6 Z" fill="#fff" opacity=".8"/><ellipse cx="7.5" cy="7.2" rx="2.1" ry="1.8" fill="#fff" stroke="#b5a545" stroke-width=".7"/></svg>
<div class="t" style="left:61.5px;top:124.5px;--w:67;letter-spacing:-0.246px">CD Drive (G:)</div>
<svg style="left:134px;top:126px" width="11" height="11"><path d="M6.2 0.8 L10.2 4.8 L8.6 5.2 L6.8 7 L6.6 9.4 L1.6 4.4 L4 4.2 L5.8 2.4 Z" fill="#8a8f98"/><path d="M4 7 L0.8 10.2" stroke="#8a8f98" stroke-width="1.2"/></svg>
<svg style="left:42px;top:147.5px" width="13" height="16"><use href="#fold"/></svg>
<div class="t" style="left:61.5px;top:148.5px;width:86px;overflow:hidden">common</div>
<svg style="left:42px;top:171.5px" width="13" height="16"><use href="#fold"/></svg>
<div class="t" style="left:61.5px;top:172.5px;width:86px;overflow:hidden">FOR EXCEL INVOICE</div>
<svg style="left:42px;top:195.5px" width="13" height="16"><use href="#fold"/></svg>
<div class="t" style="left:61.5px;top:196.5px;width:86px;overflow:hidden;--w:50.8;letter-spacing:0.307px">pdfImage</div>
<svg style="left:42px;top:219.5px" width="13" height="16"><use href="#fold"/></svg>
<div class="t" style="left:61.5px;top:220.5px;width:86px;overflow:hidden">SplitCourierShipment</div>
<svg style="left:32px;top:254px" width="16" height="11"><path d="M4 10.5 A3.2 3.2 0 0 1 3.4 4.2 A4.4 4.4 0 0 1 11.4 3 A3.9 3.9 0 0 1 12.6 10.5 Z" fill="#1a86e0"/><path d="M4 10.5 A3.2 3.2 0 0 1 3.4 4.2 A4.4 4.4 0 0 1 6 1.2 L12.6 10.5Z" fill="#0f6cbd" opacity=".55"/></svg>
<div class="t" style="left:53px;top:253px;--w:49;letter-spacing:0.004px">OneDrive</div>
<svg style="left:32px;top:284px" width="16" height="15"><rect x="1" y="0.5" width="14" height="9.5" fill="#5fc3f2" stroke="#4a7da8" stroke-width="1"/><path d="M1.5 1 L14.5 1 L1.5 9.5Z" fill="#8fd8fa" opacity=".7"/><path d="M5 12.5 H11 M8 10 V12.5 M0.5 14 H15.5" stroke="#6f8aa3" stroke-width="1"/></svg>
<div class="t" style="left:53px;top:284.5px;--w:39;letter-spacing:-0.319px">This PC</div>
<svg style="left:40px;top:308px" width="16" height="16"><path d="M8 0.5 L15.5 3.5 V12.5 L8 15.5 L0.5 12.5 V3.5 Z" fill="#35c4d9"/><path d="M8 6.5 L15.5 3.5 V12.5 L8 15.5 Z" fill="#1798b5"/><path d="M8 6.5 L0.5 3.5 V12.5 L8 15.5 Z" fill="#9be7ef"/><path d="M8 0.5 L15.5 3.5 L8 6.5 L0.5 3.5Z" fill="#4fd6e6"/></svg>
<div class="t" style="left:61.5px;top:309px;--w:56.5;letter-spacing:-0.086px">3D Objects</div>
<svg style="left:40px;top:333px" width="16" height="13"><rect x="0.5" y="0.5" width="15" height="12" fill="#1e90ec" stroke="#1668b8"/><path d="M0.5 0.5 H15.5 L0.5 11Z" fill="#39a4f5" opacity=".8"/><path d="M2 10.8 H5 M11.5 10.8 H14" stroke="#cfe8ff" stroke-width="1"/></svg>
<div class="t" style="left:61.5px;top:333px;--w:42;letter-spacing:-0.076px">Desktop</div>
<svg style="left:42px;top:356px" width="12" height="16"><path d="M0.5 0.5 H8.5 L11.5 3.5 V15.5 H0.5Z" fill="#fff" stroke="#8c8c8c"/><path d="M8.5 0.5 V3.5 H11.5" fill="none" stroke="#8c8c8c"/><path d="M2.5 4.5 H6 M2.5 6.5 H9.5 M2.5 8.5 H9.5 M2.5 10.5 H9.5 M2.5 12.5 H9.5" stroke="#4a8fd6" stroke-width="1"/><rect x="5.5" y="9.5" width="4" height="3" fill="#5aa46a"/></svg>
<div class="t" style="left:61.5px;top:357px;--w:60.5;letter-spacing:0.207px">Documents</div>
<svg style="left:40px;top:380px" width="16" height="16"><path d="M6 0 H10 V7 H15 L8 15 L1 7 H6Z" fill="#2f8de4"/><path d="M6 0 H10 V7 H15 L12.5 9.8 L6 4Z" fill="#55a9f2" opacity=".6"/></svg>
<div class="t" style="left:61.5px;top:381px;--w:58.8;letter-spacing:0.160px">Downloads</div>
<div class="a" style="left:8px;top:400px;width:140px;height:10px;overflow:hidden"><svg style="left:38px;top:2px" width="10" height="14"><path d="M2 0 L9 5 L9 8 L2 4Z" fill="#1f8fe8"/><path d="M2 0 V12" stroke="#1f8fe8" stroke-width="1.6"/></svg><div class="t" style="left:53.5px;top:5px">Music</div></div>
<!-- file list -->
<div class="a" style="left:167px;top:120px;width:449px;height:275px;background:#fff"></div>
<div class="a" style="left:439px;top:120px;width:1px;height:25px;background:#e5e5e5"></div>
<div class="a" style="left:583px;top:120px;width:1px;height:25px;background:#e5e5e5"></div>
<svg style="left:305px;top:120px" width="8" height="5"><path d="M0.5 4.5 L4 1 L7.5 4.5" stroke="#6d6d6d" stroke-width="1" fill="none"/></svg>
<div class="t" style="left:185.5px;top:126px;color:#4c607a;--w:31.5;letter-spacing:0.141px">Name</div>
<div class="t" style="left:446.5px;top:126px;color:#4c607a;--w:74;letter-spacing:0.189px">Date modified</div>
<div class="a" style="left:584px;top:120px;width:32px;height:275px;overflow:hidden">
<div class="t" style="left:6.5px;top:6px;font-size:11px;color:#4c607a;--w:23;letter-spacing:-0.215px">Type</div>
<div class="t" style="left:6.5px;top:34.5px;color:#6d6d6d">Chrome HTML</div>
<div class="t" style="left:6.5px;top:55.5px;color:#6d6d6d">Chrome HTML</div>
<div class="t" style="left:6.5px;top:76.5px;color:#6d6d6d">Chrome HTML</div>
<div class="t" style="left:6.5px;top:97.5px;color:#6d6d6d">Chrome HTML</div>
<div class="t" style="left:6.5px;top:118.5px;color:#6d6d6d">Chrome HTML</div>
<div class="t" style="left:6.5px;top:139.5px;color:#6d6d6d">Chrome HTML</div>
<div class="t" style="left:6.5px;top:160.5px;color:#6d6d6d">Chrome HTML</div>
<div class="t" style="left:6.5px;top:181.5px;color:#6d6d6d">Chrome HTML</div>
<div class="t" style="left:6.5px;top:202.5px;color:#6d6d6d">Chrome HTML</div>
<div class="t" style="left:6.5px;top:223.5px;color:#6d6d6d">Chrome HTML</div>
<div class="t" style="left:6.5px;top:244.5px;color:#6d6d6d">Chrome HTML</div>
<div class="t" style="left:6.5px;top:265.5px;color:#6d6d6d">Chrome HTML</div>
</div>
<div class="a" style="left:167px;top:145px;width:449px;height:250px;overflow:hidden">
<svg style="left:19px;top:8.5px" width="16" height="16"><use href="#chrome"/></svg>
<div class="t" style="left:39px;top:9.5px;--w:76.5;letter-spacing:0.073px">Untitled - 0001</div>
<div class="t" style="left:279.5px;top:9.5px;color:#6d6d6d;--w:110;letter-spacing:-0.080px">01-05-2024 10:43 AM</div>
<svg style="left:19px;top:29.5px" width="16" height="16"><use href="#chrome"/></svg>
<div class="t" style="left:39px;top:30.5px;--w:76.5;letter-spacing:0.073px">Untitled - 0002</div>
<div class="t" style="left:279.5px;top:30.5px;color:#6d6d6d;--w:110;letter-spacing:-0.080px">01-05-2024 10:43 AM</div>
<svg style="left:19px;top:50.5px" width="16" height="16"><use href="#chrome"/></svg>
<div class="t" style="left:39px;top:51.5px;--w:76.5;letter-spacing:0.073px">Untitled - 0003</div>
<div class="t" style="left:279.5px;top:51.5px;color:#6d6d6d;--w:110;letter-spacing:-0.080px">01-05-2024 10:43 AM</div>
<svg style="left:19px;top:71.5px" width="16" height="16"><use href="#chrome"/></svg>
<div class="t" style="left:39px;top:72.5px;--w:76.5;letter-spacing:0.073px">Untitled - 0004</div>
<div class="t" style="left:279.5px;top:72.5px;color:#6d6d6d;--w:110;letter-spacing:-0.080px">01-05-2024 10:44 AM</div>
<svg style="left:19px;top:92.5px" width="16" height="16"><use href="#chrome"/></svg>
<div class="t" style="left:39px;top:93.5px;--w:76.5;letter-spacing:0.073px">Untitled - 0005</div>
<div class="t" style="left:279.5px;top:93.5px;color:#6d6d6d;--w:110;letter-spacing:-0.080px">01-05-2024 10:44 AM</div>
<svg style="left:19px;top:113.5px" width="16" height="16"><use href="#chrome"/></svg>
<div class="t" style="left:39px;top:114.5px;--w:76.5;letter-spacing:0.073px">Untitled - 0006</div>
<div class="t" style="left:279.5px;top:114.5px;color:#6d6d6d;--w:110;letter-spacing:-0.080px">01-05-2024 10:44 AM</div>
<svg style="left:19px;top:134.5px" width="16" height="16"><use href="#chrome"/></svg>
<div class="t" style="left:39px;top:135.5px;--w:76.5;letter-spacing:0.073px">Untitled - 0007</div>
<div class="t" style="left:279.5px;top:135.5px;color:#6d6d6d;--w:110;letter-spacing:-0.080px">01-05-2024 10:44 AM</div>
<svg style="left:19px;top:155.5px" width="16" height="16"><use href="#chrome"/></svg>
<div class="t" style="left:39px;top:156.5px;--w:76.5;letter-spacing:0.073px">Untitled - 0008</div>
<div class="t" style="left:279.5px;top:156.5px;color:#6d6d6d;--w:110;letter-spacing:-0.080px">01-05-2024 10:44 AM</div>
<svg style="left:19px;top:176.5px" width="16" height="16"><use href="#chrome"/></svg>
<div class="t" style="left:39px;top:177.5px;--w:76.5;letter-spacing:0.073px">Untitled - 0009</div>
<div class="t" style="left:279.5px;top:177.5px;color:#6d6d6d;--w:110;letter-spacing:-0.080px">01-05-2024 10:44 AM</div>
<svg style="left:19px;top:197.5px" width="16" height="16"><use href="#chrome"/></svg>
<div class="t" style="left:39px;top:198.5px;--w:76.5;letter-spacing:0.073px">Untitled - 0010</div>
<div class="t" style="left:279.5px;top:198.5px;color:#6d6d6d;--w:110;letter-spacing:-0.080px">01-05-2024 10:44 AM</div>
<svg style="left:19px;top:218.5px" width="16" height="16"><use href="#chrome"/></svg>
<div class="t" style="left:39px;top:219.5px;--w:76.5;letter-spacing:0.130px">Untitled - 0011</div>
<div class="t" style="left:279.5px;top:219.5px;color:#6d6d6d;--w:110;letter-spacing:-0.080px">01-05-2024 10:44 AM</div>
<svg style="left:19px;top:239.5px" width="16" height="16"><use href="#chrome"/></svg>
<div class="t" style="left:39px;top:240.5px;--w:76.5;letter-spacing:0.073px">Untitled - 0012</div>
<div class="t" style="left:279.5px;top:240.5px;color:#6d6d6d;--w:110;letter-spacing:-0.080px">01-05-2024 10:44 AM</div>
</div>
<div class="a" style="left:616px;top:120px;width:16px;height:290px;background:#f0f0f0"></div>
<div class="a" style="left:617px;top:137px;width:14px;height:70px;background:#cdcdcd"></div>
<svg style="left:619px;top:125px" width="9" height="6"><path d="M0.7 5.3 L4.5 1.5 L8.3 5.3" stroke="#505050" stroke-width="1.6" fill="none"/></svg>
<svg style="left:619px;top:383px" width="9" height="6"><path d="M0.7 0.7 L4.5 4.5 L8.3 0.7" stroke="#505050" stroke-width="1.6" fill="none"/></svg>
<div class="a" style="left:167px;top:395px;width:449px;height:15px;background:#f0f0f0"></div>
<div class="a" style="left:185px;top:396px;width:295px;height:13px;background:#cdcdcd"></div>
<svg style="left:173px;top:397px" width="6" height="9"><path d="M5.3 0.7 L1.5 4.5 L5.3 8.3" stroke="#505050" stroke-width="1.6" fill="none"/></svg>
<svg style="left:604px;top:397px" width="6" height="9"><path d="M0.7 0.7 L4.5 4.5 L0.7 8.3" stroke="#505050" stroke-width="1.6" fill="none"/></svg>
<!-- dialog bottom -->
<div class="t" style="left:74px;top:425.5px;--w:53.5;letter-spacing:-0.062px">File name:</div>
<div class="a" style="left:133px;top:421px;width:495px;height:23px;background:#fff;border:1px solid #7a7a7a"></div>
<div class="t" style="left:139px;top:425px;--w:41.5;letter-spacing:0.273px">Untitled</div>
<svg style="left:613px;top:430px" width="9" height="6"><path d="M0.5 0.5 L4.5 4.5 L8.5 0.5" stroke="#444" stroke-width="1.1" fill="none"/></svg>
<div class="t" style="left:61px;top:451px;--w:66.5;letter-spacing:-0.288px">Save as type:</div>
<div class="a" style="left:133px;top:446px;width:495px;height:23px;background:#e1e1e1;border:1px solid #adadad"></div>
<div class="t" style="left:137px;top:451px;--w:176.5;letter-spacing:0.019px">Searchable PDF Document (*.pdf)</div>
<svg style="left:613px;top:455px" width="9" height="6"><path d="M0.5 0.5 L4.5 4.5 L8.5 0.5" stroke="#444" stroke-width="1.1" fill="none"/></svg>
<div class="a" style="left:133px;top:481px;width:13px;height:13px;background:#fff;border:1px solid #333"></div>
<div class="t" style="left:149.5px;top:480px;color:#0a66cc;--w:113.5;letter-spacing:0.241px">Open document after</div>
<div class="t" style="left:149.5px;top:495px;color:#0a66cc;--w:33.5;letter-spacing:-0.003px">saving</div>
<div class="a" style="left:384px;top:480px;width:158px;height:24px;background:#e1e1e1;border:1px solid #adadad"></div>
<div class="t" style="left:384px;top:485px;width:158px;text-align:center">Options...</div>
<div class="t" style="left:339px;top:510px;color:#6d6d6d;--w:63.7;letter-spacing:0.091px">File options:</div>
<div class="a" style="left:408px;top:509px;width:135px;height:23px;background:#cce4f7;border:1px solid #0078d7"></div>
<div class="t" style="left:412.5px;top:514px;--w:108.5;letter-spacing:-0.107px">Create a separate file</div>
<svg style="left:529px;top:518px" width="9" height="6"><path d="M0.5 0.5 L4.5 4.5 L8.5 0.5" stroke="#333" stroke-width="1.1" fill="none"/></svg>
<svg style="left:21px;top:562px" width="10" height="7"><path d="M0.8 6 L5 1.6 L9.2 6" stroke="#333" stroke-width="1.5" fill="none"/></svg>
<div class="t" style="left:38px;top:559px;--w:66;letter-spacing:0.022px">Hide Folders</div>
<div class="a" style="left:408px;top:532px;width:218px;height:61px;background:#fff;border:1px solid #0078d7;box-shadow:3px 3px 4px rgba(0,0,0,.35)"></div>
<div class="a" style="left:409px;top:548px;width:216px;height:15px;background:#0078d7"></div>
<div class="t" style="left:411.5px;top:534px;--w:162.7;letter-spacing:0.009px">Create a single file for all pages</div>
<div class="t" style="left:411.5px;top:549px;color:#fff;--w:183.2;letter-spacing:-0.050px">Create a separate file for each page</div>
<div class="t" style="left:411.5px;top:564px;--w:211.3;letter-spacing:-0.017px">Create a separate file for each source file</div>
<div class="t" style="left:411.5px;top:579px;--w:188.7;letter-spacing:0.014px">Create a new file at each blank page</div>
<svg style="left:293.5px;top:535px" width="115" height="40"><path d="M6 17.5 C 30 19.5, 60 18, 103 18.5 M80 8 C 88 11, 96 14, 104 18.5 C 94 23, 82 27, 71 32" stroke="#e0141e" stroke-width="5" fill="none" stroke-linecap="round" stroke-linejoin="round"/></svg>

</body>
</html>
